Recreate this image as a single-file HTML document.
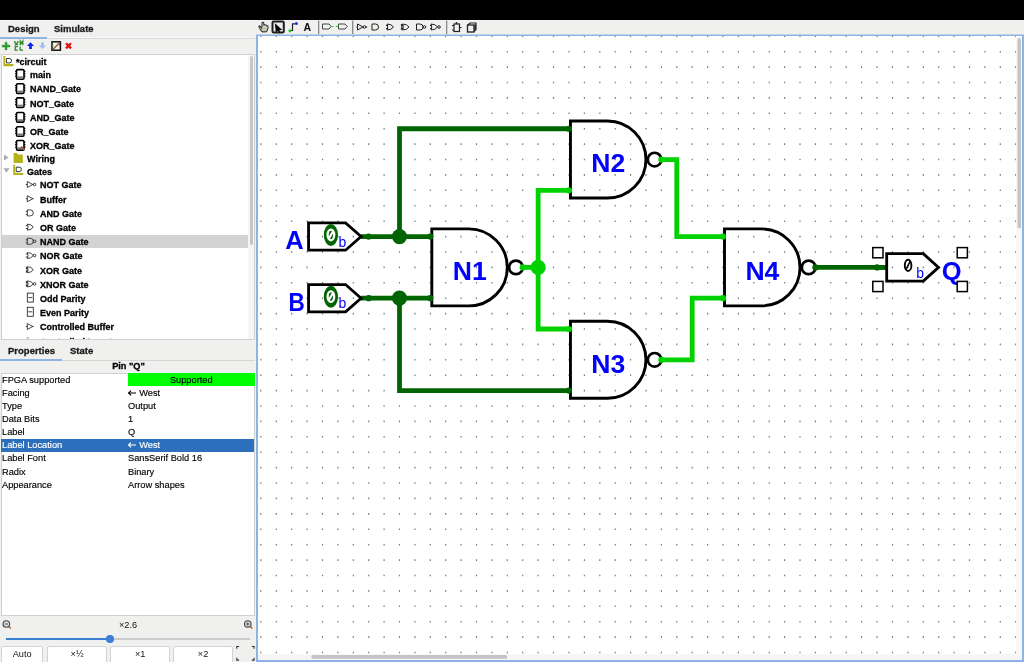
<!DOCTYPE html>
<html><head><meta charset="utf-8"><style>
html,body{margin:0;padding:0}
body{width:1024px;height:662px;overflow:hidden;position:relative;background:#f0f0ef;font-family:"Liberation Sans",sans-serif}
.tt,.pt,.tab,.a,svg{will-change:transform}
.tt,.tab{-webkit-text-stroke-width:0.3px}
.pt{-webkit-text-stroke-width:0.15px}
.a{position:absolute}
.tt{position:absolute;font-weight:bold;font-size:9px;line-height:10px;white-space:nowrap;color:#000}
.pt{position:absolute;font-size:9.25px;line-height:10px;white-space:nowrap;color:#000}
.tab{position:absolute;font-weight:bold;font-size:9.5px;line-height:11px;color:#1a1a1a}
</style></head><body>
<div class="a" style="left:0;top:0;width:1024px;height:19.5px;background:#000"></div>
<div class="a" style="left:0;top:19.5px;width:256px;height:1px;background:#f9f9f9"></div>
<div class="tab" style="left:7.6px;top:23px">Design</div>
<div class="tab" style="left:54.2px;top:23px">Simulate</div>
<div class="a" style="left:0;top:37.2px;width:47px;height:1.5px;background:#8fb4e6"></div>
<div class="a" style="left:47px;top:37px;width:208px;height:1px;background:#f9f9f9"></div><div class="a" style="left:47px;top:38px;width:208px;height:1.2px;background:#d9d9d9"></div>
<div class="a" style="left:1px;top:54px;width:254px;height:285.5px;background:#fff;border:1px solid #d0d0d0;box-sizing:border-box"></div>
<div class="a" style="left:248px;top:55px;width:6px;height:283.5px;background:#f5f5f5"></div>
<div class="a" style="left:250px;top:56px;width:3.2px;height:189px;background:#c6c6c6;border-radius:1.6px"></div>
<div class="a" style="left:2px;top:235px;width:246.2px;height:13.3px;background:#d3d3d3"></div>
<div class="a" style="left:0;top:55px;width:248px;height:283.5px;overflow:hidden">
<div style="position:absolute;left:0;top:-55px">
<div class="tt" style="left:16.2px;top:57.4px">*circuit</div>
<div class="tt" style="left:29.8px;top:70.2px">main</div>
<div class="tt" style="left:29.8px;top:84.4px">NAND_Gate</div>
<div class="tt" style="left:29.8px;top:98.5px">NOT_Gate</div>
<div class="tt" style="left:29.8px;top:113.1px">AND_Gate</div>
<div class="tt" style="left:29.8px;top:127.3px">OR_Gate</div>
<div class="tt" style="left:29.8px;top:141.1px">XOR_Gate</div>
<div class="tt" style="left:27px;top:153.8px">Wiring</div>
<div class="tt" style="left:27px;top:166.6px">Gates</div>
<div class="tt" style="left:40.1px;top:180.4px">NOT Gate</div>
<div class="tt" style="left:40.1px;top:194.6px">Buffer</div>
<div class="tt" style="left:40.1px;top:208.8px">AND Gate</div>
<div class="tt" style="left:40.1px;top:223.0px">OR Gate</div>
<div class="tt" style="left:40.1px;top:237.2px">NAND Gate</div>
<div class="tt" style="left:40.1px;top:251.4px">NOR Gate</div>
<div class="tt" style="left:40.1px;top:265.6px">XOR Gate</div>
<div class="tt" style="left:40.1px;top:279.8px">XNOR Gate</div>
<div class="tt" style="left:40.1px;top:294.0px">Odd Parity</div>
<div class="tt" style="left:40.1px;top:308.2px">Even Parity</div>
<div class="tt" style="left:40.1px;top:322.4px">Controlled Buffer</div>
<div class="tt" style="left:40.1px;top:336.6px">Controlled Inverter</div>
</div></div>
<div class="tab" style="left:7.6px;top:344.5px">Properties</div>
<div class="tab" style="left:69.6px;top:344.5px">State</div>
<div class="a" style="left:0;top:358.8px;width:62px;height:1.5px;background:#8fb4e6"></div>
<div class="a" style="left:62px;top:359.5px;width:193px;height:1px;background:#d6d6d6"></div>
<div class="a" style="left:1.2px;top:361.2px;width:255px;text-align:center;font-weight:bold;font-size:9.2px;line-height:10px;color:#000;-webkit-text-stroke-width:0.3px">Pin "Q"</div>
<div class="a" style="left:1px;top:372.5px;width:254px;height:243px;background:#fff;border:1px solid #d0d0d0;box-sizing:border-box"></div>
<div class="a" style="left:128px;top:373.3px;width:126.5px;height:13.4px;background:#00ff00"></div>
<div class="a" style="left:1.3px;top:438.8px;width:253.2px;height:12.5px;background:#2c6fbd"></div>
<div class="pt" style="left:1.9px;top:374.8px;color:#000">FPGA supported</div>
<div class="pt" style="left:128px;width:126.5px;text-align:center;top:374.8px">Supported</div>
<div class="pt" style="left:1.9px;top:387.9px;color:#000">Facing</div>
<div class="pt" style="left:128px;top:387.9px;color:#000"><svg width="8" height="6" style="display:inline-block;vertical-align:0px;margin-right:3.2px" viewBox="0 0 8 6"><path d="M0.3 3H8M3 0.6L0.6 3L3 5.4" fill="none" stroke="currentColor" stroke-width="1.1"/></svg>West</div>
<div class="pt" style="left:1.9px;top:401.0px;color:#000">Type</div>
<div class="pt" style="left:128px;top:401.0px;color:#000">Output</div>
<div class="pt" style="left:1.9px;top:414.1px;color:#000">Data Bits</div>
<div class="pt" style="left:128px;top:414.1px;color:#000">1</div>
<div class="pt" style="left:1.9px;top:427.2px;color:#000">Label</div>
<div class="pt" style="left:128px;top:427.2px;color:#000">Q</div>
<div class="pt" style="left:1.9px;top:440.3px;color:#fff">Label Location</div>
<div class="pt" style="left:128px;top:440.3px;color:#fff"><svg width="8" height="6" style="display:inline-block;vertical-align:0px;margin-right:3.2px" viewBox="0 0 8 6"><path d="M0.3 3H8M3 0.6L0.6 3L3 5.4" fill="none" stroke="currentColor" stroke-width="1.1"/></svg>West</div>
<div class="pt" style="left:1.9px;top:453.4px;color:#000">Label Font</div>
<div class="pt" style="left:128px;top:453.4px;color:#000">SansSerif Bold 16</div>
<div class="pt" style="left:1.9px;top:466.5px;color:#000">Radix</div>
<div class="pt" style="left:128px;top:466.5px;color:#000">Binary</div>
<div class="pt" style="left:1.9px;top:479.6px;color:#000">Appearance</div>
<div class="pt" style="left:128px;top:479.6px;color:#000">Arrow shapes</div>
<div class="a" style="left:0;top:620px;width:256px;text-align:center;font-size:9.2px;line-height:10px;color:#111">×2.6</div>
<div class="a" style="left:5.6px;top:638.2px;width:103.6px;height:1.6px;background:#3b7fd6"></div>
<div class="a" style="left:109.2px;top:638.2px;width:141px;height:1.6px;background:#cbcbcb"></div>
<div class="a" style="left:105.5px;top:635.2px;width:7.5px;height:7.5px;border-radius:50%;background:#3b7fd6"></div>
<div style="will-change:transform;position:absolute;top:646px;height:20px;background:#fff;border:1px solid #d2d2d2;box-sizing:border-box;border-radius:2px;text-align:center;font-size:9.2px;line-height:14px;color:#111;left:1.3px;width:42.4px">Auto</div>
<div style="will-change:transform;position:absolute;top:646px;height:20px;background:#fff;border:1px solid #d2d2d2;box-sizing:border-box;border-radius:2px;text-align:center;font-size:9.2px;line-height:14px;color:#111;left:46.5px;width:60.2px">×½</div>
<div style="will-change:transform;position:absolute;top:646px;height:20px;background:#fff;border:1px solid #d2d2d2;box-sizing:border-box;border-radius:2px;text-align:center;font-size:9.2px;line-height:14px;color:#111;left:109.7px;width:60.4px">×1</div>
<div style="will-change:transform;position:absolute;top:646px;height:20px;background:#fff;border:1px solid #d2d2d2;box-sizing:border-box;border-radius:2px;text-align:center;font-size:9.2px;line-height:14px;color:#111;left:173.4px;width:60.2px">×2</div>
<svg class="a" style="left:0;top:0" width="1024" height="662" viewBox="0 0 1024 662">
<defs><clipPath id="treeclip"><rect x="0" y="0" width="248" height="338.3"/></clipPath></defs>
<g clip-path="url(#treeclip)"><path d="M3.4 56h2v8h8v2.2h-10z" fill="#b5b21a"/><rect x="5.4" y="57" width="7.5" height="7" fill="#fff"/><path d="M6.4 58.5h3a2.2 2.2 0 0 1 0 4.4h-3z" fill="none" stroke="#333" stroke-width="1"/>
<rect x="16.5" y="69.6" width="7.5" height="9.6" rx="1.2" fill="#fff" stroke="#000" stroke-width="1.6"/><rect x="17.3" y="76.39999999999999" width="5.9" height="2" fill="#777"/><rect x="15" y="70.8" width="1.5" height="1" fill="#000"/><rect x="24" y="70.8" width="1.5" height="1" fill="#000"/><rect x="15" y="73.2" width="1.5" height="1" fill="#000"/><rect x="24" y="73.2" width="1.5" height="1" fill="#000"/><rect x="15" y="75.6" width="1.5" height="1" fill="#000"/><rect x="24" y="75.6" width="1.5" height="1" fill="#000"/>
<rect x="16.5" y="83.8" width="7.5" height="9.6" rx="1.2" fill="#fff" stroke="#000" stroke-width="1.6"/><rect x="17.3" y="90.6" width="5.9" height="2" fill="#777"/><rect x="15" y="85.0" width="1.5" height="1" fill="#000"/><rect x="24" y="85.0" width="1.5" height="1" fill="#000"/><rect x="15" y="87.4" width="1.5" height="1" fill="#000"/><rect x="24" y="87.4" width="1.5" height="1" fill="#000"/><rect x="15" y="89.8" width="1.5" height="1" fill="#000"/><rect x="24" y="89.8" width="1.5" height="1" fill="#000"/>
<rect x="16.5" y="97.89999999999999" width="7.5" height="9.6" rx="1.2" fill="#fff" stroke="#000" stroke-width="1.6"/><rect x="17.3" y="104.69999999999999" width="5.9" height="2" fill="#777"/><rect x="15" y="99.1" width="1.5" height="1" fill="#000"/><rect x="24" y="99.1" width="1.5" height="1" fill="#000"/><rect x="15" y="101.5" width="1.5" height="1" fill="#000"/><rect x="24" y="101.5" width="1.5" height="1" fill="#000"/><rect x="15" y="103.89999999999999" width="1.5" height="1" fill="#000"/><rect x="24" y="103.89999999999999" width="1.5" height="1" fill="#000"/>
<rect x="16.5" y="112.5" width="7.5" height="9.6" rx="1.2" fill="#fff" stroke="#000" stroke-width="1.6"/><rect x="17.3" y="119.3" width="5.9" height="2" fill="#777"/><rect x="15" y="113.7" width="1.5" height="1" fill="#000"/><rect x="24" y="113.7" width="1.5" height="1" fill="#000"/><rect x="15" y="116.10000000000001" width="1.5" height="1" fill="#000"/><rect x="24" y="116.10000000000001" width="1.5" height="1" fill="#000"/><rect x="15" y="118.5" width="1.5" height="1" fill="#000"/><rect x="24" y="118.5" width="1.5" height="1" fill="#000"/>
<rect x="16.5" y="126.7" width="7.5" height="9.6" rx="1.2" fill="#fff" stroke="#000" stroke-width="1.6"/><rect x="17.3" y="133.5" width="5.9" height="2" fill="#777"/><rect x="15" y="127.9" width="1.5" height="1" fill="#000"/><rect x="24" y="127.9" width="1.5" height="1" fill="#000"/><rect x="15" y="130.3" width="1.5" height="1" fill="#000"/><rect x="24" y="130.3" width="1.5" height="1" fill="#000"/><rect x="15" y="132.70000000000002" width="1.5" height="1" fill="#000"/><rect x="24" y="132.70000000000002" width="1.5" height="1" fill="#000"/>
<rect x="16.5" y="140.5" width="7.5" height="9.6" rx="1.2" fill="#fff" stroke="#000" stroke-width="1.6"/><rect x="17.3" y="147.29999999999998" width="5.9" height="2" fill="#777"/><rect x="15" y="141.7" width="1.5" height="1" fill="#000"/><rect x="24" y="141.7" width="1.5" height="1" fill="#000"/><rect x="15" y="144.1" width="1.5" height="1" fill="#000"/><rect x="24" y="144.1" width="1.5" height="1" fill="#000"/><rect x="15" y="146.5" width="1.5" height="1" fill="#000"/><rect x="24" y="146.5" width="1.5" height="1" fill="#000"/>
<path d="M21 146.7l3.5 3.5" stroke="#a0522d" stroke-width="1.8"/>
<path d="M4 154.4l4.5 3l-4.5 3z" fill="#aaa"/>
<path d="M13.6 153.1h3.2l1 1.3h5v8.7h-9.2z" fill="#b5b21a"/>
<path d="M3.5 168.2h6l-3 4.5z" fill="#aaa"/>
<path d="M13.2 164.7h2v8h8v2.2h-10z" fill="#b5b21a"/><rect x="15.2" y="165.7" width="7.5" height="7" fill="#fff"/><path d="M16.2 167.2h3a2.2 2.2 0 0 1 0 4.4h-3z" fill="none" stroke="#333" stroke-width="1"/>
<path d="M27.3 181.5v6l5.5-3z" fill="none" stroke="#222" stroke-width="0.85"/><path d="M25.8 184.5h1.5M32.8 184.5h1" stroke="#222" stroke-width="0.85"/><circle cx="34.6" cy="184.5" r="1.3" fill="none" stroke="#222" stroke-width="0.85"/>
<path d="M27.3 195.7v6l5.5-3z" fill="none" stroke="#222" stroke-width="0.85"/><path d="M25.8 198.7h1.5M32.8 198.7h1" stroke="#222" stroke-width="0.85"/>
<path d="M27.3 209.9h3a3 3 0 0 1 0 6h-3z" fill="none" stroke="#222" stroke-width="0.85"/><path d="M25.8 211.4h1.5M25.8 214.4h1.5" stroke="#222" stroke-width="0.85"/>
<path d="M27.3 224.1q4 0 6 3q-2 3 -6 3q1.5-3 0-6z" fill="none" stroke="#222" stroke-width="0.85"/><path d="M25.8 225.6h2M25.8 228.6h2" stroke="#222" stroke-width="0.85"/>
<path d="M27.3 238.3h3a3 3 0 0 1 0 6h-3z" fill="none" stroke="#222" stroke-width="0.85"/><path d="M25.8 239.8h1.5M25.8 242.8h1.5" stroke="#222" stroke-width="0.85"/><circle cx="34.6" cy="241.3" r="1.3" fill="none" stroke="#222" stroke-width="0.85"/>
<path d="M27.3 252.5q4 0 6 3q-2 3 -6 3q1.5-3 0-6z" fill="none" stroke="#222" stroke-width="0.85"/><path d="M25.8 254.0h2M25.8 257.0h2" stroke="#222" stroke-width="0.85"/><circle cx="34.6" cy="255.5" r="1.3" fill="none" stroke="#222" stroke-width="0.85"/>
<path d="M27.3 266.7q4 0 6 3q-2 3 -6 3q1.5-3 0-6z" fill="none" stroke="#222" stroke-width="0.85"/><path d="M25.8 268.2h2M25.8 271.2h2" stroke="#222" stroke-width="0.85"/><path d="M26.3 266.7q1.5 3 0 6" fill="none" stroke="#222" stroke-width="0.85"/>
<path d="M27.3 280.9q4 0 6 3q-2 3 -6 3q1.5-3 0-6z" fill="none" stroke="#222" stroke-width="0.85"/><path d="M25.8 282.4h2M25.8 285.4h2" stroke="#222" stroke-width="0.85"/><path d="M26.3 280.9q1.5 3 0 6" fill="none" stroke="#222" stroke-width="0.85"/><circle cx="34.6" cy="283.9" r="1.3" fill="none" stroke="#222" stroke-width="0.85"/>
<rect x="27.3" y="293.1" width="6" height="9" fill="none" stroke="#222" stroke-width="0.85"/><path d="M28.3 297.6h4" stroke="#222" stroke-width="0.85"/>
<rect x="27.3" y="307.3" width="6" height="9" fill="none" stroke="#222" stroke-width="0.85"/><path d="M28.3 311.8h4" stroke="#222" stroke-width="0.85"/>
<path d="M27.3 323.5v6l5.5-3z" fill="none" stroke="#222" stroke-width="0.85"/><path d="M25.8 326.5h1.5M32.8 326.5h1" stroke="#222" stroke-width="0.85"/>
<path d="M27.3 337.7v6l5.5-3z" fill="none" stroke="#222" stroke-width="0.85"/><path d="M25.8 340.7h1.5M32.8 340.7h1" stroke="#222" stroke-width="0.85"/></g>
<path d="M5.2 42.3h1.7v2.9h2.9v1.7h-2.9v2.9h-1.7v-2.9h-2.9v-1.7h2.9z" fill="#22b022" stroke="#0d6a0d" stroke-width="0.5"/>
<path d="M14.8 41v1.5l3 2.5v0M17.8 41v1.5l-3 2.5M20.2 45.3v-4.3l1.3 2 1.3-2v4.3M17.8 46.5h-2.6v3.6h2.6M20.2 46.5v3.6h2.8" fill="none" stroke="#2a8a2a" stroke-width="1.3"/>
<path d="M30.5 42.3l3.6 3.6h-2.2v3.1h-2.8v-3.1h-2.2z" fill="#0a28f0"/>
<path d="M42.5 49l3.6-3.6h-2.2v-3.1h-2.8v3.1h-2.2z" fill="#9cc0ee"/>
<rect x="52" y="41.8" width="8.4" height="8.4" fill="#f4f4f4" stroke="#111" stroke-width="1.5"/><path d="M52.8 49.4l7-7" stroke="#9a5a1a" stroke-width="1.4"/><rect x="52.4" y="45" width="1" height="1.5" fill="#22c022"/><rect x="59.2" y="43.5" width="1" height="2" fill="#2255ee"/>
<path d="M66 43.2L71 48.4M71 43.2L66 48.4" stroke="#e01010" stroke-width="2.3"/>
<path d="M261.8 28.2L259.6 25.9L258.8 26.7L261.2 30.8L262.6 31.9L266.6 31.8L268.1 28L267.8 25.8L266.6 25.7L266.2 25L265 25L264.6 24.6L263.8 24.8L263.7 22.6L262.7 22.2L262 23z" fill="#cfcfcf" stroke="#3a3a3a" stroke-width="1.1"/><path d="M262.5 28.2l2.8 2M264 27.5l2.5 2" stroke="#c9c04a" stroke-width="0.9"/>
<rect x="272.5" y="21.5" width="11.3" height="11" rx="1.3" fill="#ececec" stroke="#1e1e1e" stroke-width="2"/><path d="M274.9 23.3L282.3 30L279.3 30.2L280.6 32.6L279.2 33.2L277.9 30.8L275.8 32.4z" fill="#000"/>
<path d="M290.5 30.5h2v-6.7h2.4" fill="none" stroke="#222" stroke-width="1.2"/><circle cx="290" cy="30.8" r="1.6" fill="#1ec81e"/><circle cx="296.4" cy="23.6" r="1.5" fill="#1a2ef0"/>
<text x="307.3" y="30.6" text-anchor="middle" font-family="Liberation Sans" font-weight="bold" font-size="10.5" fill="#111">A</text>
<rect x="318" y="20.5" width="1.3" height="13.5" fill="#8a8a8a"/><rect x="352" y="20.5" width="1.3" height="13.5" fill="#8a8a8a"/><rect x="446" y="20.5" width="1.3" height="13.5" fill="#8a8a8a"/>
<path d="M322.5 24h6.5l2.2 2.5-2.2 2.5h-6.5z" fill="none" stroke="#333" stroke-width="0.9"/><path d="M331.2 26.5h2.2" stroke="#22cc22" stroke-width="1"/>
<path d="M338.5 24h6.5l2.2 2.5-2.2 2.5h-6.5z" fill="none" stroke="#333" stroke-width="0.9"/><path d="M336 26.5h2.5" stroke="#22cc22" stroke-width="1"/>
<path d="M357.5 24v6l5.5-3z" fill="none" stroke="#222" stroke-width="1"/><circle cx="364.5" cy="27" r="1.3" fill="none" stroke="#222" stroke-width="1"/><path d="M356.5 27h1M365.8 27h1.4" stroke="#222" stroke-width="1"/>
<path d="M372 24h3.5a3 3 0 0 1 0 6h-3.5z" fill="none" stroke="#222" stroke-width="1"/>
<path d="M387 24q4.5 0 6.5 3q-2 3-6.5 3q1.5-3 0-6z" fill="none" stroke="#222" stroke-width="1"/><path d="M386 25.5h2M386 28.5h2" stroke="#222" stroke-width="1"/>
<path d="M402.5 24q4.5 0 6.5 3q-2 3-6.5 3q1.5-3 0-6z" fill="none" stroke="#222" stroke-width="1"/><path d="M401.5 25.5h2M401.5 28.5h2" stroke="#222" stroke-width="1"/><path d="M401.2 24q1.5 3 0 6" fill="none" stroke="#222" stroke-width="1"/>
<path d="M416.5 24h3.5a3 3 0 0 1 0 6h-3.5z" fill="none" stroke="#222" stroke-width="1"/><circle cx="424.5" cy="27" r="1.3" fill="none" stroke="#222" stroke-width="1"/>
<path d="M431 24q4.5 0 6.5 3q-2 3-6.5 3q1.5-3 0-6z" fill="none" stroke="#222" stroke-width="1"/><path d="M430 25.5h2M430 28.5h2" stroke="#222" stroke-width="1"/><circle cx="439" cy="27" r="1.3" fill="none" stroke="#222" stroke-width="1"/>
<rect x="454" y="24" width="5.5" height="7.5" fill="none" stroke="#222" stroke-width="1.2"/><path d="M452 25.5h2M452 30h2M459.5 27.5h2" stroke="#222" stroke-width="1"/><circle cx="456.5" cy="23" r="1" fill="#222"/>
<path d="M468 25l2-2h6v6.5l-2 2" fill="none" stroke="#222" stroke-width="1.2"/><rect x="467.5" y="25" width="6.5" height="7" fill="none" stroke="#222" stroke-width="1.3"/><path d="M475 24.5v5" stroke="#222" stroke-width="1.6"/>
<circle cx="6.3" cy="624" r="3.3" fill="#ddd" stroke="#444" stroke-width="1.1"/><path d="M4.6 624h3.4" stroke="#444" stroke-width="0.9"/><path d="M8.8 626.6l2 2" stroke="#b05a10" stroke-width="1.4"/>
<circle cx="247.8" cy="624" r="3.3" fill="#ddd" stroke="#444" stroke-width="1.1"/><path d="M246.1 624h3.4M247.8 622.3v3.4" stroke="#444" stroke-width="0.9"/><path d="M250.3 626.6l2 2" stroke="#b05a10" stroke-width="1.4"/>
<path d="M236.8 648.8v-2.3h2.3M251.8 646.5h2.3v2.3M236.8 657.8v2.3h2.3M254.1 657.8v2.3h-2.3" fill="none" stroke="#333" stroke-width="1.1"/>
</svg>
<div class="a" style="left:256px;top:35px;width:768px;height:627px;background:#fff"></div>
<svg class="a" style="left:0;top:0" width="1024" height="662" viewBox="0 0 1024 662">
<defs><clipPath id="cc"><rect x="258" y="36.1" width="758" height="618"/></clipPath></defs>
<g clip-path="url(#cc)">
<path d="M260.2 35.5h1.2v1.6h-1.2zM260.2 50.9h1.2v1.6h-1.2zM260.2 66.3h1.2v1.6h-1.2zM260.2 81.7h1.2v1.6h-1.2zM260.2 97.1h1.2v1.6h-1.2zM260.2 112.5h1.2v1.6h-1.2zM260.2 127.9h1.2v1.6h-1.2zM260.2 143.3h1.2v1.6h-1.2zM260.2 158.7h1.2v1.6h-1.2zM260.2 174.1h1.2v1.6h-1.2zM260.2 189.5h1.2v1.6h-1.2zM260.2 205.0h1.2v1.6h-1.2zM260.2 220.4h1.2v1.6h-1.2zM260.2 235.8h1.2v1.6h-1.2zM260.2 251.2h1.2v1.6h-1.2zM260.2 266.6h1.2v1.6h-1.2zM260.2 282.0h1.2v1.6h-1.2zM260.2 297.4h1.2v1.6h-1.2zM260.2 312.8h1.2v1.6h-1.2zM260.2 328.2h1.2v1.6h-1.2zM260.2 343.6h1.2v1.6h-1.2zM260.2 359.0h1.2v1.6h-1.2zM260.2 374.4h1.2v1.6h-1.2zM260.2 389.8h1.2v1.6h-1.2zM260.2 405.2h1.2v1.6h-1.2zM260.2 420.6h1.2v1.6h-1.2zM260.2 436.0h1.2v1.6h-1.2zM260.2 451.4h1.2v1.6h-1.2zM260.2 466.8h1.2v1.6h-1.2zM260.2 482.2h1.2v1.6h-1.2zM260.2 497.6h1.2v1.6h-1.2zM260.2 513.1h1.2v1.6h-1.2zM260.2 528.5h1.2v1.6h-1.2zM260.2 543.9h1.2v1.6h-1.2zM260.2 559.3h1.2v1.6h-1.2zM260.2 574.7h1.2v1.6h-1.2zM260.2 590.1h1.2v1.6h-1.2zM260.2 605.5h1.2v1.6h-1.2zM260.2 620.9h1.2v1.6h-1.2zM260.2 636.3h1.2v1.6h-1.2zM260.2 651.7h1.2v1.6h-1.2zM275.7 35.5h1.2v1.6h-1.2zM275.7 50.9h1.2v1.6h-1.2zM275.7 66.3h1.2v1.6h-1.2zM275.7 81.7h1.2v1.6h-1.2zM275.7 97.1h1.2v1.6h-1.2zM275.7 112.5h1.2v1.6h-1.2zM275.7 127.9h1.2v1.6h-1.2zM275.7 143.3h1.2v1.6h-1.2zM275.7 158.7h1.2v1.6h-1.2zM275.7 174.1h1.2v1.6h-1.2zM275.7 189.5h1.2v1.6h-1.2zM275.7 205.0h1.2v1.6h-1.2zM275.7 220.4h1.2v1.6h-1.2zM275.7 235.8h1.2v1.6h-1.2zM275.7 251.2h1.2v1.6h-1.2zM275.7 266.6h1.2v1.6h-1.2zM275.7 282.0h1.2v1.6h-1.2zM275.7 297.4h1.2v1.6h-1.2zM275.7 312.8h1.2v1.6h-1.2zM275.7 328.2h1.2v1.6h-1.2zM275.7 343.6h1.2v1.6h-1.2zM275.7 359.0h1.2v1.6h-1.2zM275.7 374.4h1.2v1.6h-1.2zM275.7 389.8h1.2v1.6h-1.2zM275.7 405.2h1.2v1.6h-1.2zM275.7 420.6h1.2v1.6h-1.2zM275.7 436.0h1.2v1.6h-1.2zM275.7 451.4h1.2v1.6h-1.2zM275.7 466.8h1.2v1.6h-1.2zM275.7 482.2h1.2v1.6h-1.2zM275.7 497.6h1.2v1.6h-1.2zM275.7 513.1h1.2v1.6h-1.2zM275.7 528.5h1.2v1.6h-1.2zM275.7 543.9h1.2v1.6h-1.2zM275.7 559.3h1.2v1.6h-1.2zM275.7 574.7h1.2v1.6h-1.2zM275.7 590.1h1.2v1.6h-1.2zM275.7 605.5h1.2v1.6h-1.2zM275.7 620.9h1.2v1.6h-1.2zM275.7 636.3h1.2v1.6h-1.2zM275.7 651.7h1.2v1.6h-1.2zM291.1 35.5h1.2v1.6h-1.2zM291.1 50.9h1.2v1.6h-1.2zM291.1 66.3h1.2v1.6h-1.2zM291.1 81.7h1.2v1.6h-1.2zM291.1 97.1h1.2v1.6h-1.2zM291.1 112.5h1.2v1.6h-1.2zM291.1 127.9h1.2v1.6h-1.2zM291.1 143.3h1.2v1.6h-1.2zM291.1 158.7h1.2v1.6h-1.2zM291.1 174.1h1.2v1.6h-1.2zM291.1 189.5h1.2v1.6h-1.2zM291.1 205.0h1.2v1.6h-1.2zM291.1 220.4h1.2v1.6h-1.2zM291.1 235.8h1.2v1.6h-1.2zM291.1 251.2h1.2v1.6h-1.2zM291.1 266.6h1.2v1.6h-1.2zM291.1 282.0h1.2v1.6h-1.2zM291.1 297.4h1.2v1.6h-1.2zM291.1 312.8h1.2v1.6h-1.2zM291.1 328.2h1.2v1.6h-1.2zM291.1 343.6h1.2v1.6h-1.2zM291.1 359.0h1.2v1.6h-1.2zM291.1 374.4h1.2v1.6h-1.2zM291.1 389.8h1.2v1.6h-1.2zM291.1 405.2h1.2v1.6h-1.2zM291.1 420.6h1.2v1.6h-1.2zM291.1 436.0h1.2v1.6h-1.2zM291.1 451.4h1.2v1.6h-1.2zM291.1 466.8h1.2v1.6h-1.2zM291.1 482.2h1.2v1.6h-1.2zM291.1 497.6h1.2v1.6h-1.2zM291.1 513.1h1.2v1.6h-1.2zM291.1 528.5h1.2v1.6h-1.2zM291.1 543.9h1.2v1.6h-1.2zM291.1 559.3h1.2v1.6h-1.2zM291.1 574.7h1.2v1.6h-1.2zM291.1 590.1h1.2v1.6h-1.2zM291.1 605.5h1.2v1.6h-1.2zM291.1 620.9h1.2v1.6h-1.2zM291.1 636.3h1.2v1.6h-1.2zM291.1 651.7h1.2v1.6h-1.2zM306.5 35.5h1.2v1.6h-1.2zM306.5 50.9h1.2v1.6h-1.2zM306.5 66.3h1.2v1.6h-1.2zM306.5 81.7h1.2v1.6h-1.2zM306.5 97.1h1.2v1.6h-1.2zM306.5 112.5h1.2v1.6h-1.2zM306.5 127.9h1.2v1.6h-1.2zM306.5 143.3h1.2v1.6h-1.2zM306.5 158.7h1.2v1.6h-1.2zM306.5 174.1h1.2v1.6h-1.2zM306.5 189.5h1.2v1.6h-1.2zM306.5 205.0h1.2v1.6h-1.2zM306.5 220.4h1.2v1.6h-1.2zM306.5 235.8h1.2v1.6h-1.2zM306.5 251.2h1.2v1.6h-1.2zM306.5 266.6h1.2v1.6h-1.2zM306.5 282.0h1.2v1.6h-1.2zM306.5 297.4h1.2v1.6h-1.2zM306.5 312.8h1.2v1.6h-1.2zM306.5 328.2h1.2v1.6h-1.2zM306.5 343.6h1.2v1.6h-1.2zM306.5 359.0h1.2v1.6h-1.2zM306.5 374.4h1.2v1.6h-1.2zM306.5 389.8h1.2v1.6h-1.2zM306.5 405.2h1.2v1.6h-1.2zM306.5 420.6h1.2v1.6h-1.2zM306.5 436.0h1.2v1.6h-1.2zM306.5 451.4h1.2v1.6h-1.2zM306.5 466.8h1.2v1.6h-1.2zM306.5 482.2h1.2v1.6h-1.2zM306.5 497.6h1.2v1.6h-1.2zM306.5 513.1h1.2v1.6h-1.2zM306.5 528.5h1.2v1.6h-1.2zM306.5 543.9h1.2v1.6h-1.2zM306.5 559.3h1.2v1.6h-1.2zM306.5 574.7h1.2v1.6h-1.2zM306.5 590.1h1.2v1.6h-1.2zM306.5 605.5h1.2v1.6h-1.2zM306.5 620.9h1.2v1.6h-1.2zM306.5 636.3h1.2v1.6h-1.2zM306.5 651.7h1.2v1.6h-1.2zM321.9 35.5h1.2v1.6h-1.2zM321.9 50.9h1.2v1.6h-1.2zM321.9 66.3h1.2v1.6h-1.2zM321.9 81.7h1.2v1.6h-1.2zM321.9 97.1h1.2v1.6h-1.2zM321.9 112.5h1.2v1.6h-1.2zM321.9 127.9h1.2v1.6h-1.2zM321.9 143.3h1.2v1.6h-1.2zM321.9 158.7h1.2v1.6h-1.2zM321.9 174.1h1.2v1.6h-1.2zM321.9 189.5h1.2v1.6h-1.2zM321.9 205.0h1.2v1.6h-1.2zM321.9 220.4h1.2v1.6h-1.2zM321.9 235.8h1.2v1.6h-1.2zM321.9 251.2h1.2v1.6h-1.2zM321.9 266.6h1.2v1.6h-1.2zM321.9 282.0h1.2v1.6h-1.2zM321.9 297.4h1.2v1.6h-1.2zM321.9 312.8h1.2v1.6h-1.2zM321.9 328.2h1.2v1.6h-1.2zM321.9 343.6h1.2v1.6h-1.2zM321.9 359.0h1.2v1.6h-1.2zM321.9 374.4h1.2v1.6h-1.2zM321.9 389.8h1.2v1.6h-1.2zM321.9 405.2h1.2v1.6h-1.2zM321.9 420.6h1.2v1.6h-1.2zM321.9 436.0h1.2v1.6h-1.2zM321.9 451.4h1.2v1.6h-1.2zM321.9 466.8h1.2v1.6h-1.2zM321.9 482.2h1.2v1.6h-1.2zM321.9 497.6h1.2v1.6h-1.2zM321.9 513.1h1.2v1.6h-1.2zM321.9 528.5h1.2v1.6h-1.2zM321.9 543.9h1.2v1.6h-1.2zM321.9 559.3h1.2v1.6h-1.2zM321.9 574.7h1.2v1.6h-1.2zM321.9 590.1h1.2v1.6h-1.2zM321.9 605.5h1.2v1.6h-1.2zM321.9 620.9h1.2v1.6h-1.2zM321.9 636.3h1.2v1.6h-1.2zM321.9 651.7h1.2v1.6h-1.2zM337.3 35.5h1.2v1.6h-1.2zM337.3 50.9h1.2v1.6h-1.2zM337.3 66.3h1.2v1.6h-1.2zM337.3 81.7h1.2v1.6h-1.2zM337.3 97.1h1.2v1.6h-1.2zM337.3 112.5h1.2v1.6h-1.2zM337.3 127.9h1.2v1.6h-1.2zM337.3 143.3h1.2v1.6h-1.2zM337.3 158.7h1.2v1.6h-1.2zM337.3 174.1h1.2v1.6h-1.2zM337.3 189.5h1.2v1.6h-1.2zM337.3 205.0h1.2v1.6h-1.2zM337.3 220.4h1.2v1.6h-1.2zM337.3 235.8h1.2v1.6h-1.2zM337.3 251.2h1.2v1.6h-1.2zM337.3 266.6h1.2v1.6h-1.2zM337.3 282.0h1.2v1.6h-1.2zM337.3 297.4h1.2v1.6h-1.2zM337.3 312.8h1.2v1.6h-1.2zM337.3 328.2h1.2v1.6h-1.2zM337.3 343.6h1.2v1.6h-1.2zM337.3 359.0h1.2v1.6h-1.2zM337.3 374.4h1.2v1.6h-1.2zM337.3 389.8h1.2v1.6h-1.2zM337.3 405.2h1.2v1.6h-1.2zM337.3 420.6h1.2v1.6h-1.2zM337.3 436.0h1.2v1.6h-1.2zM337.3 451.4h1.2v1.6h-1.2zM337.3 466.8h1.2v1.6h-1.2zM337.3 482.2h1.2v1.6h-1.2zM337.3 497.6h1.2v1.6h-1.2zM337.3 513.1h1.2v1.6h-1.2zM337.3 528.5h1.2v1.6h-1.2zM337.3 543.9h1.2v1.6h-1.2zM337.3 559.3h1.2v1.6h-1.2zM337.3 574.7h1.2v1.6h-1.2zM337.3 590.1h1.2v1.6h-1.2zM337.3 605.5h1.2v1.6h-1.2zM337.3 620.9h1.2v1.6h-1.2zM337.3 636.3h1.2v1.6h-1.2zM337.3 651.7h1.2v1.6h-1.2zM352.7 35.5h1.2v1.6h-1.2zM352.7 50.9h1.2v1.6h-1.2zM352.7 66.3h1.2v1.6h-1.2zM352.7 81.7h1.2v1.6h-1.2zM352.7 97.1h1.2v1.6h-1.2zM352.7 112.5h1.2v1.6h-1.2zM352.7 127.9h1.2v1.6h-1.2zM352.7 143.3h1.2v1.6h-1.2zM352.7 158.7h1.2v1.6h-1.2zM352.7 174.1h1.2v1.6h-1.2zM352.7 189.5h1.2v1.6h-1.2zM352.7 205.0h1.2v1.6h-1.2zM352.7 220.4h1.2v1.6h-1.2zM352.7 235.8h1.2v1.6h-1.2zM352.7 251.2h1.2v1.6h-1.2zM352.7 266.6h1.2v1.6h-1.2zM352.7 282.0h1.2v1.6h-1.2zM352.7 297.4h1.2v1.6h-1.2zM352.7 312.8h1.2v1.6h-1.2zM352.7 328.2h1.2v1.6h-1.2zM352.7 343.6h1.2v1.6h-1.2zM352.7 359.0h1.2v1.6h-1.2zM352.7 374.4h1.2v1.6h-1.2zM352.7 389.8h1.2v1.6h-1.2zM352.7 405.2h1.2v1.6h-1.2zM352.7 420.6h1.2v1.6h-1.2zM352.7 436.0h1.2v1.6h-1.2zM352.7 451.4h1.2v1.6h-1.2zM352.7 466.8h1.2v1.6h-1.2zM352.7 482.2h1.2v1.6h-1.2zM352.7 497.6h1.2v1.6h-1.2zM352.7 513.1h1.2v1.6h-1.2zM352.7 528.5h1.2v1.6h-1.2zM352.7 543.9h1.2v1.6h-1.2zM352.7 559.3h1.2v1.6h-1.2zM352.7 574.7h1.2v1.6h-1.2zM352.7 590.1h1.2v1.6h-1.2zM352.7 605.5h1.2v1.6h-1.2zM352.7 620.9h1.2v1.6h-1.2zM352.7 636.3h1.2v1.6h-1.2zM352.7 651.7h1.2v1.6h-1.2zM368.1 35.5h1.2v1.6h-1.2zM368.1 50.9h1.2v1.6h-1.2zM368.1 66.3h1.2v1.6h-1.2zM368.1 81.7h1.2v1.6h-1.2zM368.1 97.1h1.2v1.6h-1.2zM368.1 112.5h1.2v1.6h-1.2zM368.1 127.9h1.2v1.6h-1.2zM368.1 143.3h1.2v1.6h-1.2zM368.1 158.7h1.2v1.6h-1.2zM368.1 174.1h1.2v1.6h-1.2zM368.1 189.5h1.2v1.6h-1.2zM368.1 205.0h1.2v1.6h-1.2zM368.1 220.4h1.2v1.6h-1.2zM368.1 235.8h1.2v1.6h-1.2zM368.1 251.2h1.2v1.6h-1.2zM368.1 266.6h1.2v1.6h-1.2zM368.1 282.0h1.2v1.6h-1.2zM368.1 297.4h1.2v1.6h-1.2zM368.1 312.8h1.2v1.6h-1.2zM368.1 328.2h1.2v1.6h-1.2zM368.1 343.6h1.2v1.6h-1.2zM368.1 359.0h1.2v1.6h-1.2zM368.1 374.4h1.2v1.6h-1.2zM368.1 389.8h1.2v1.6h-1.2zM368.1 405.2h1.2v1.6h-1.2zM368.1 420.6h1.2v1.6h-1.2zM368.1 436.0h1.2v1.6h-1.2zM368.1 451.4h1.2v1.6h-1.2zM368.1 466.8h1.2v1.6h-1.2zM368.1 482.2h1.2v1.6h-1.2zM368.1 497.6h1.2v1.6h-1.2zM368.1 513.1h1.2v1.6h-1.2zM368.1 528.5h1.2v1.6h-1.2zM368.1 543.9h1.2v1.6h-1.2zM368.1 559.3h1.2v1.6h-1.2zM368.1 574.7h1.2v1.6h-1.2zM368.1 590.1h1.2v1.6h-1.2zM368.1 605.5h1.2v1.6h-1.2zM368.1 620.9h1.2v1.6h-1.2zM368.1 636.3h1.2v1.6h-1.2zM368.1 651.7h1.2v1.6h-1.2zM383.5 35.5h1.2v1.6h-1.2zM383.5 50.9h1.2v1.6h-1.2zM383.5 66.3h1.2v1.6h-1.2zM383.5 81.7h1.2v1.6h-1.2zM383.5 97.1h1.2v1.6h-1.2zM383.5 112.5h1.2v1.6h-1.2zM383.5 127.9h1.2v1.6h-1.2zM383.5 143.3h1.2v1.6h-1.2zM383.5 158.7h1.2v1.6h-1.2zM383.5 174.1h1.2v1.6h-1.2zM383.5 189.5h1.2v1.6h-1.2zM383.5 205.0h1.2v1.6h-1.2zM383.5 220.4h1.2v1.6h-1.2zM383.5 235.8h1.2v1.6h-1.2zM383.5 251.2h1.2v1.6h-1.2zM383.5 266.6h1.2v1.6h-1.2zM383.5 282.0h1.2v1.6h-1.2zM383.5 297.4h1.2v1.6h-1.2zM383.5 312.8h1.2v1.6h-1.2zM383.5 328.2h1.2v1.6h-1.2zM383.5 343.6h1.2v1.6h-1.2zM383.5 359.0h1.2v1.6h-1.2zM383.5 374.4h1.2v1.6h-1.2zM383.5 389.8h1.2v1.6h-1.2zM383.5 405.2h1.2v1.6h-1.2zM383.5 420.6h1.2v1.6h-1.2zM383.5 436.0h1.2v1.6h-1.2zM383.5 451.4h1.2v1.6h-1.2zM383.5 466.8h1.2v1.6h-1.2zM383.5 482.2h1.2v1.6h-1.2zM383.5 497.6h1.2v1.6h-1.2zM383.5 513.1h1.2v1.6h-1.2zM383.5 528.5h1.2v1.6h-1.2zM383.5 543.9h1.2v1.6h-1.2zM383.5 559.3h1.2v1.6h-1.2zM383.5 574.7h1.2v1.6h-1.2zM383.5 590.1h1.2v1.6h-1.2zM383.5 605.5h1.2v1.6h-1.2zM383.5 620.9h1.2v1.6h-1.2zM383.5 636.3h1.2v1.6h-1.2zM383.5 651.7h1.2v1.6h-1.2zM398.9 35.5h1.2v1.6h-1.2zM398.9 50.9h1.2v1.6h-1.2zM398.9 66.3h1.2v1.6h-1.2zM398.9 81.7h1.2v1.6h-1.2zM398.9 97.1h1.2v1.6h-1.2zM398.9 112.5h1.2v1.6h-1.2zM398.9 127.9h1.2v1.6h-1.2zM398.9 143.3h1.2v1.6h-1.2zM398.9 158.7h1.2v1.6h-1.2zM398.9 174.1h1.2v1.6h-1.2zM398.9 189.5h1.2v1.6h-1.2zM398.9 205.0h1.2v1.6h-1.2zM398.9 220.4h1.2v1.6h-1.2zM398.9 235.8h1.2v1.6h-1.2zM398.9 251.2h1.2v1.6h-1.2zM398.9 266.6h1.2v1.6h-1.2zM398.9 282.0h1.2v1.6h-1.2zM398.9 297.4h1.2v1.6h-1.2zM398.9 312.8h1.2v1.6h-1.2zM398.9 328.2h1.2v1.6h-1.2zM398.9 343.6h1.2v1.6h-1.2zM398.9 359.0h1.2v1.6h-1.2zM398.9 374.4h1.2v1.6h-1.2zM398.9 389.8h1.2v1.6h-1.2zM398.9 405.2h1.2v1.6h-1.2zM398.9 420.6h1.2v1.6h-1.2zM398.9 436.0h1.2v1.6h-1.2zM398.9 451.4h1.2v1.6h-1.2zM398.9 466.8h1.2v1.6h-1.2zM398.9 482.2h1.2v1.6h-1.2zM398.9 497.6h1.2v1.6h-1.2zM398.9 513.1h1.2v1.6h-1.2zM398.9 528.5h1.2v1.6h-1.2zM398.9 543.9h1.2v1.6h-1.2zM398.9 559.3h1.2v1.6h-1.2zM398.9 574.7h1.2v1.6h-1.2zM398.9 590.1h1.2v1.6h-1.2zM398.9 605.5h1.2v1.6h-1.2zM398.9 620.9h1.2v1.6h-1.2zM398.9 636.3h1.2v1.6h-1.2zM398.9 651.7h1.2v1.6h-1.2zM414.3 35.5h1.2v1.6h-1.2zM414.3 50.9h1.2v1.6h-1.2zM414.3 66.3h1.2v1.6h-1.2zM414.3 81.7h1.2v1.6h-1.2zM414.3 97.1h1.2v1.6h-1.2zM414.3 112.5h1.2v1.6h-1.2zM414.3 127.9h1.2v1.6h-1.2zM414.3 143.3h1.2v1.6h-1.2zM414.3 158.7h1.2v1.6h-1.2zM414.3 174.1h1.2v1.6h-1.2zM414.3 189.5h1.2v1.6h-1.2zM414.3 205.0h1.2v1.6h-1.2zM414.3 220.4h1.2v1.6h-1.2zM414.3 235.8h1.2v1.6h-1.2zM414.3 251.2h1.2v1.6h-1.2zM414.3 266.6h1.2v1.6h-1.2zM414.3 282.0h1.2v1.6h-1.2zM414.3 297.4h1.2v1.6h-1.2zM414.3 312.8h1.2v1.6h-1.2zM414.3 328.2h1.2v1.6h-1.2zM414.3 343.6h1.2v1.6h-1.2zM414.3 359.0h1.2v1.6h-1.2zM414.3 374.4h1.2v1.6h-1.2zM414.3 389.8h1.2v1.6h-1.2zM414.3 405.2h1.2v1.6h-1.2zM414.3 420.6h1.2v1.6h-1.2zM414.3 436.0h1.2v1.6h-1.2zM414.3 451.4h1.2v1.6h-1.2zM414.3 466.8h1.2v1.6h-1.2zM414.3 482.2h1.2v1.6h-1.2zM414.3 497.6h1.2v1.6h-1.2zM414.3 513.1h1.2v1.6h-1.2zM414.3 528.5h1.2v1.6h-1.2zM414.3 543.9h1.2v1.6h-1.2zM414.3 559.3h1.2v1.6h-1.2zM414.3 574.7h1.2v1.6h-1.2zM414.3 590.1h1.2v1.6h-1.2zM414.3 605.5h1.2v1.6h-1.2zM414.3 620.9h1.2v1.6h-1.2zM414.3 636.3h1.2v1.6h-1.2zM414.3 651.7h1.2v1.6h-1.2zM429.7 35.5h1.2v1.6h-1.2zM429.7 50.9h1.2v1.6h-1.2zM429.7 66.3h1.2v1.6h-1.2zM429.7 81.7h1.2v1.6h-1.2zM429.7 97.1h1.2v1.6h-1.2zM429.7 112.5h1.2v1.6h-1.2zM429.7 127.9h1.2v1.6h-1.2zM429.7 143.3h1.2v1.6h-1.2zM429.7 158.7h1.2v1.6h-1.2zM429.7 174.1h1.2v1.6h-1.2zM429.7 189.5h1.2v1.6h-1.2zM429.7 205.0h1.2v1.6h-1.2zM429.7 220.4h1.2v1.6h-1.2zM429.7 235.8h1.2v1.6h-1.2zM429.7 251.2h1.2v1.6h-1.2zM429.7 266.6h1.2v1.6h-1.2zM429.7 282.0h1.2v1.6h-1.2zM429.7 297.4h1.2v1.6h-1.2zM429.7 312.8h1.2v1.6h-1.2zM429.7 328.2h1.2v1.6h-1.2zM429.7 343.6h1.2v1.6h-1.2zM429.7 359.0h1.2v1.6h-1.2zM429.7 374.4h1.2v1.6h-1.2zM429.7 389.8h1.2v1.6h-1.2zM429.7 405.2h1.2v1.6h-1.2zM429.7 420.6h1.2v1.6h-1.2zM429.7 436.0h1.2v1.6h-1.2zM429.7 451.4h1.2v1.6h-1.2zM429.7 466.8h1.2v1.6h-1.2zM429.7 482.2h1.2v1.6h-1.2zM429.7 497.6h1.2v1.6h-1.2zM429.7 513.1h1.2v1.6h-1.2zM429.7 528.5h1.2v1.6h-1.2zM429.7 543.9h1.2v1.6h-1.2zM429.7 559.3h1.2v1.6h-1.2zM429.7 574.7h1.2v1.6h-1.2zM429.7 590.1h1.2v1.6h-1.2zM429.7 605.5h1.2v1.6h-1.2zM429.7 620.9h1.2v1.6h-1.2zM429.7 636.3h1.2v1.6h-1.2zM429.7 651.7h1.2v1.6h-1.2zM445.1 35.5h1.2v1.6h-1.2zM445.1 50.9h1.2v1.6h-1.2zM445.1 66.3h1.2v1.6h-1.2zM445.1 81.7h1.2v1.6h-1.2zM445.1 97.1h1.2v1.6h-1.2zM445.1 112.5h1.2v1.6h-1.2zM445.1 127.9h1.2v1.6h-1.2zM445.1 143.3h1.2v1.6h-1.2zM445.1 158.7h1.2v1.6h-1.2zM445.1 174.1h1.2v1.6h-1.2zM445.1 189.5h1.2v1.6h-1.2zM445.1 205.0h1.2v1.6h-1.2zM445.1 220.4h1.2v1.6h-1.2zM445.1 235.8h1.2v1.6h-1.2zM445.1 251.2h1.2v1.6h-1.2zM445.1 266.6h1.2v1.6h-1.2zM445.1 282.0h1.2v1.6h-1.2zM445.1 297.4h1.2v1.6h-1.2zM445.1 312.8h1.2v1.6h-1.2zM445.1 328.2h1.2v1.6h-1.2zM445.1 343.6h1.2v1.6h-1.2zM445.1 359.0h1.2v1.6h-1.2zM445.1 374.4h1.2v1.6h-1.2zM445.1 389.8h1.2v1.6h-1.2zM445.1 405.2h1.2v1.6h-1.2zM445.1 420.6h1.2v1.6h-1.2zM445.1 436.0h1.2v1.6h-1.2zM445.1 451.4h1.2v1.6h-1.2zM445.1 466.8h1.2v1.6h-1.2zM445.1 482.2h1.2v1.6h-1.2zM445.1 497.6h1.2v1.6h-1.2zM445.1 513.1h1.2v1.6h-1.2zM445.1 528.5h1.2v1.6h-1.2zM445.1 543.9h1.2v1.6h-1.2zM445.1 559.3h1.2v1.6h-1.2zM445.1 574.7h1.2v1.6h-1.2zM445.1 590.1h1.2v1.6h-1.2zM445.1 605.5h1.2v1.6h-1.2zM445.1 620.9h1.2v1.6h-1.2zM445.1 636.3h1.2v1.6h-1.2zM445.1 651.7h1.2v1.6h-1.2zM460.5 35.5h1.2v1.6h-1.2zM460.5 50.9h1.2v1.6h-1.2zM460.5 66.3h1.2v1.6h-1.2zM460.5 81.7h1.2v1.6h-1.2zM460.5 97.1h1.2v1.6h-1.2zM460.5 112.5h1.2v1.6h-1.2zM460.5 127.9h1.2v1.6h-1.2zM460.5 143.3h1.2v1.6h-1.2zM460.5 158.7h1.2v1.6h-1.2zM460.5 174.1h1.2v1.6h-1.2zM460.5 189.5h1.2v1.6h-1.2zM460.5 205.0h1.2v1.6h-1.2zM460.5 220.4h1.2v1.6h-1.2zM460.5 235.8h1.2v1.6h-1.2zM460.5 251.2h1.2v1.6h-1.2zM460.5 266.6h1.2v1.6h-1.2zM460.5 282.0h1.2v1.6h-1.2zM460.5 297.4h1.2v1.6h-1.2zM460.5 312.8h1.2v1.6h-1.2zM460.5 328.2h1.2v1.6h-1.2zM460.5 343.6h1.2v1.6h-1.2zM460.5 359.0h1.2v1.6h-1.2zM460.5 374.4h1.2v1.6h-1.2zM460.5 389.8h1.2v1.6h-1.2zM460.5 405.2h1.2v1.6h-1.2zM460.5 420.6h1.2v1.6h-1.2zM460.5 436.0h1.2v1.6h-1.2zM460.5 451.4h1.2v1.6h-1.2zM460.5 466.8h1.2v1.6h-1.2zM460.5 482.2h1.2v1.6h-1.2zM460.5 497.6h1.2v1.6h-1.2zM460.5 513.1h1.2v1.6h-1.2zM460.5 528.5h1.2v1.6h-1.2zM460.5 543.9h1.2v1.6h-1.2zM460.5 559.3h1.2v1.6h-1.2zM460.5 574.7h1.2v1.6h-1.2zM460.5 590.1h1.2v1.6h-1.2zM460.5 605.5h1.2v1.6h-1.2zM460.5 620.9h1.2v1.6h-1.2zM460.5 636.3h1.2v1.6h-1.2zM460.5 651.7h1.2v1.6h-1.2zM475.9 35.5h1.2v1.6h-1.2zM475.9 50.9h1.2v1.6h-1.2zM475.9 66.3h1.2v1.6h-1.2zM475.9 81.7h1.2v1.6h-1.2zM475.9 97.1h1.2v1.6h-1.2zM475.9 112.5h1.2v1.6h-1.2zM475.9 127.9h1.2v1.6h-1.2zM475.9 143.3h1.2v1.6h-1.2zM475.9 158.7h1.2v1.6h-1.2zM475.9 174.1h1.2v1.6h-1.2zM475.9 189.5h1.2v1.6h-1.2zM475.9 205.0h1.2v1.6h-1.2zM475.9 220.4h1.2v1.6h-1.2zM475.9 235.8h1.2v1.6h-1.2zM475.9 251.2h1.2v1.6h-1.2zM475.9 266.6h1.2v1.6h-1.2zM475.9 282.0h1.2v1.6h-1.2zM475.9 297.4h1.2v1.6h-1.2zM475.9 312.8h1.2v1.6h-1.2zM475.9 328.2h1.2v1.6h-1.2zM475.9 343.6h1.2v1.6h-1.2zM475.9 359.0h1.2v1.6h-1.2zM475.9 374.4h1.2v1.6h-1.2zM475.9 389.8h1.2v1.6h-1.2zM475.9 405.2h1.2v1.6h-1.2zM475.9 420.6h1.2v1.6h-1.2zM475.9 436.0h1.2v1.6h-1.2zM475.9 451.4h1.2v1.6h-1.2zM475.9 466.8h1.2v1.6h-1.2zM475.9 482.2h1.2v1.6h-1.2zM475.9 497.6h1.2v1.6h-1.2zM475.9 513.1h1.2v1.6h-1.2zM475.9 528.5h1.2v1.6h-1.2zM475.9 543.9h1.2v1.6h-1.2zM475.9 559.3h1.2v1.6h-1.2zM475.9 574.7h1.2v1.6h-1.2zM475.9 590.1h1.2v1.6h-1.2zM475.9 605.5h1.2v1.6h-1.2zM475.9 620.9h1.2v1.6h-1.2zM475.9 636.3h1.2v1.6h-1.2zM475.9 651.7h1.2v1.6h-1.2zM491.3 35.5h1.2v1.6h-1.2zM491.3 50.9h1.2v1.6h-1.2zM491.3 66.3h1.2v1.6h-1.2zM491.3 81.7h1.2v1.6h-1.2zM491.3 97.1h1.2v1.6h-1.2zM491.3 112.5h1.2v1.6h-1.2zM491.3 127.9h1.2v1.6h-1.2zM491.3 143.3h1.2v1.6h-1.2zM491.3 158.7h1.2v1.6h-1.2zM491.3 174.1h1.2v1.6h-1.2zM491.3 189.5h1.2v1.6h-1.2zM491.3 205.0h1.2v1.6h-1.2zM491.3 220.4h1.2v1.6h-1.2zM491.3 235.8h1.2v1.6h-1.2zM491.3 251.2h1.2v1.6h-1.2zM491.3 266.6h1.2v1.6h-1.2zM491.3 282.0h1.2v1.6h-1.2zM491.3 297.4h1.2v1.6h-1.2zM491.3 312.8h1.2v1.6h-1.2zM491.3 328.2h1.2v1.6h-1.2zM491.3 343.6h1.2v1.6h-1.2zM491.3 359.0h1.2v1.6h-1.2zM491.3 374.4h1.2v1.6h-1.2zM491.3 389.8h1.2v1.6h-1.2zM491.3 405.2h1.2v1.6h-1.2zM491.3 420.6h1.2v1.6h-1.2zM491.3 436.0h1.2v1.6h-1.2zM491.3 451.4h1.2v1.6h-1.2zM491.3 466.8h1.2v1.6h-1.2zM491.3 482.2h1.2v1.6h-1.2zM491.3 497.6h1.2v1.6h-1.2zM491.3 513.1h1.2v1.6h-1.2zM491.3 528.5h1.2v1.6h-1.2zM491.3 543.9h1.2v1.6h-1.2zM491.3 559.3h1.2v1.6h-1.2zM491.3 574.7h1.2v1.6h-1.2zM491.3 590.1h1.2v1.6h-1.2zM491.3 605.5h1.2v1.6h-1.2zM491.3 620.9h1.2v1.6h-1.2zM491.3 636.3h1.2v1.6h-1.2zM491.3 651.7h1.2v1.6h-1.2zM506.7 35.5h1.2v1.6h-1.2zM506.7 50.9h1.2v1.6h-1.2zM506.7 66.3h1.2v1.6h-1.2zM506.7 81.7h1.2v1.6h-1.2zM506.7 97.1h1.2v1.6h-1.2zM506.7 112.5h1.2v1.6h-1.2zM506.7 127.9h1.2v1.6h-1.2zM506.7 143.3h1.2v1.6h-1.2zM506.7 158.7h1.2v1.6h-1.2zM506.7 174.1h1.2v1.6h-1.2zM506.7 189.5h1.2v1.6h-1.2zM506.7 205.0h1.2v1.6h-1.2zM506.7 220.4h1.2v1.6h-1.2zM506.7 235.8h1.2v1.6h-1.2zM506.7 251.2h1.2v1.6h-1.2zM506.7 266.6h1.2v1.6h-1.2zM506.7 282.0h1.2v1.6h-1.2zM506.7 297.4h1.2v1.6h-1.2zM506.7 312.8h1.2v1.6h-1.2zM506.7 328.2h1.2v1.6h-1.2zM506.7 343.6h1.2v1.6h-1.2zM506.7 359.0h1.2v1.6h-1.2zM506.7 374.4h1.2v1.6h-1.2zM506.7 389.8h1.2v1.6h-1.2zM506.7 405.2h1.2v1.6h-1.2zM506.7 420.6h1.2v1.6h-1.2zM506.7 436.0h1.2v1.6h-1.2zM506.7 451.4h1.2v1.6h-1.2zM506.7 466.8h1.2v1.6h-1.2zM506.7 482.2h1.2v1.6h-1.2zM506.7 497.6h1.2v1.6h-1.2zM506.7 513.1h1.2v1.6h-1.2zM506.7 528.5h1.2v1.6h-1.2zM506.7 543.9h1.2v1.6h-1.2zM506.7 559.3h1.2v1.6h-1.2zM506.7 574.7h1.2v1.6h-1.2zM506.7 590.1h1.2v1.6h-1.2zM506.7 605.5h1.2v1.6h-1.2zM506.7 620.9h1.2v1.6h-1.2zM506.7 636.3h1.2v1.6h-1.2zM506.7 651.7h1.2v1.6h-1.2zM522.1 35.5h1.2v1.6h-1.2zM522.1 50.9h1.2v1.6h-1.2zM522.1 66.3h1.2v1.6h-1.2zM522.1 81.7h1.2v1.6h-1.2zM522.1 97.1h1.2v1.6h-1.2zM522.1 112.5h1.2v1.6h-1.2zM522.1 127.9h1.2v1.6h-1.2zM522.1 143.3h1.2v1.6h-1.2zM522.1 158.7h1.2v1.6h-1.2zM522.1 174.1h1.2v1.6h-1.2zM522.1 189.5h1.2v1.6h-1.2zM522.1 205.0h1.2v1.6h-1.2zM522.1 220.4h1.2v1.6h-1.2zM522.1 235.8h1.2v1.6h-1.2zM522.1 251.2h1.2v1.6h-1.2zM522.1 266.6h1.2v1.6h-1.2zM522.1 282.0h1.2v1.6h-1.2zM522.1 297.4h1.2v1.6h-1.2zM522.1 312.8h1.2v1.6h-1.2zM522.1 328.2h1.2v1.6h-1.2zM522.1 343.6h1.2v1.6h-1.2zM522.1 359.0h1.2v1.6h-1.2zM522.1 374.4h1.2v1.6h-1.2zM522.1 389.8h1.2v1.6h-1.2zM522.1 405.2h1.2v1.6h-1.2zM522.1 420.6h1.2v1.6h-1.2zM522.1 436.0h1.2v1.6h-1.2zM522.1 451.4h1.2v1.6h-1.2zM522.1 466.8h1.2v1.6h-1.2zM522.1 482.2h1.2v1.6h-1.2zM522.1 497.6h1.2v1.6h-1.2zM522.1 513.1h1.2v1.6h-1.2zM522.1 528.5h1.2v1.6h-1.2zM522.1 543.9h1.2v1.6h-1.2zM522.1 559.3h1.2v1.6h-1.2zM522.1 574.7h1.2v1.6h-1.2zM522.1 590.1h1.2v1.6h-1.2zM522.1 605.5h1.2v1.6h-1.2zM522.1 620.9h1.2v1.6h-1.2zM522.1 636.3h1.2v1.6h-1.2zM522.1 651.7h1.2v1.6h-1.2zM537.5 35.5h1.2v1.6h-1.2zM537.5 50.9h1.2v1.6h-1.2zM537.5 66.3h1.2v1.6h-1.2zM537.5 81.7h1.2v1.6h-1.2zM537.5 97.1h1.2v1.6h-1.2zM537.5 112.5h1.2v1.6h-1.2zM537.5 127.9h1.2v1.6h-1.2zM537.5 143.3h1.2v1.6h-1.2zM537.5 158.7h1.2v1.6h-1.2zM537.5 174.1h1.2v1.6h-1.2zM537.5 189.5h1.2v1.6h-1.2zM537.5 205.0h1.2v1.6h-1.2zM537.5 220.4h1.2v1.6h-1.2zM537.5 235.8h1.2v1.6h-1.2zM537.5 251.2h1.2v1.6h-1.2zM537.5 266.6h1.2v1.6h-1.2zM537.5 282.0h1.2v1.6h-1.2zM537.5 297.4h1.2v1.6h-1.2zM537.5 312.8h1.2v1.6h-1.2zM537.5 328.2h1.2v1.6h-1.2zM537.5 343.6h1.2v1.6h-1.2zM537.5 359.0h1.2v1.6h-1.2zM537.5 374.4h1.2v1.6h-1.2zM537.5 389.8h1.2v1.6h-1.2zM537.5 405.2h1.2v1.6h-1.2zM537.5 420.6h1.2v1.6h-1.2zM537.5 436.0h1.2v1.6h-1.2zM537.5 451.4h1.2v1.6h-1.2zM537.5 466.8h1.2v1.6h-1.2zM537.5 482.2h1.2v1.6h-1.2zM537.5 497.6h1.2v1.6h-1.2zM537.5 513.1h1.2v1.6h-1.2zM537.5 528.5h1.2v1.6h-1.2zM537.5 543.9h1.2v1.6h-1.2zM537.5 559.3h1.2v1.6h-1.2zM537.5 574.7h1.2v1.6h-1.2zM537.5 590.1h1.2v1.6h-1.2zM537.5 605.5h1.2v1.6h-1.2zM537.5 620.9h1.2v1.6h-1.2zM537.5 636.3h1.2v1.6h-1.2zM537.5 651.7h1.2v1.6h-1.2zM552.9 35.5h1.2v1.6h-1.2zM552.9 50.9h1.2v1.6h-1.2zM552.9 66.3h1.2v1.6h-1.2zM552.9 81.7h1.2v1.6h-1.2zM552.9 97.1h1.2v1.6h-1.2zM552.9 112.5h1.2v1.6h-1.2zM552.9 127.9h1.2v1.6h-1.2zM552.9 143.3h1.2v1.6h-1.2zM552.9 158.7h1.2v1.6h-1.2zM552.9 174.1h1.2v1.6h-1.2zM552.9 189.5h1.2v1.6h-1.2zM552.9 205.0h1.2v1.6h-1.2zM552.9 220.4h1.2v1.6h-1.2zM552.9 235.8h1.2v1.6h-1.2zM552.9 251.2h1.2v1.6h-1.2zM552.9 266.6h1.2v1.6h-1.2zM552.9 282.0h1.2v1.6h-1.2zM552.9 297.4h1.2v1.6h-1.2zM552.9 312.8h1.2v1.6h-1.2zM552.9 328.2h1.2v1.6h-1.2zM552.9 343.6h1.2v1.6h-1.2zM552.9 359.0h1.2v1.6h-1.2zM552.9 374.4h1.2v1.6h-1.2zM552.9 389.8h1.2v1.6h-1.2zM552.9 405.2h1.2v1.6h-1.2zM552.9 420.6h1.2v1.6h-1.2zM552.9 436.0h1.2v1.6h-1.2zM552.9 451.4h1.2v1.6h-1.2zM552.9 466.8h1.2v1.6h-1.2zM552.9 482.2h1.2v1.6h-1.2zM552.9 497.6h1.2v1.6h-1.2zM552.9 513.1h1.2v1.6h-1.2zM552.9 528.5h1.2v1.6h-1.2zM552.9 543.9h1.2v1.6h-1.2zM552.9 559.3h1.2v1.6h-1.2zM552.9 574.7h1.2v1.6h-1.2zM552.9 590.1h1.2v1.6h-1.2zM552.9 605.5h1.2v1.6h-1.2zM552.9 620.9h1.2v1.6h-1.2zM552.9 636.3h1.2v1.6h-1.2zM552.9 651.7h1.2v1.6h-1.2zM568.4 35.5h1.2v1.6h-1.2zM568.4 50.9h1.2v1.6h-1.2zM568.4 66.3h1.2v1.6h-1.2zM568.4 81.7h1.2v1.6h-1.2zM568.4 97.1h1.2v1.6h-1.2zM568.4 112.5h1.2v1.6h-1.2zM568.4 127.9h1.2v1.6h-1.2zM568.4 143.3h1.2v1.6h-1.2zM568.4 158.7h1.2v1.6h-1.2zM568.4 174.1h1.2v1.6h-1.2zM568.4 189.5h1.2v1.6h-1.2zM568.4 205.0h1.2v1.6h-1.2zM568.4 220.4h1.2v1.6h-1.2zM568.4 235.8h1.2v1.6h-1.2zM568.4 251.2h1.2v1.6h-1.2zM568.4 266.6h1.2v1.6h-1.2zM568.4 282.0h1.2v1.6h-1.2zM568.4 297.4h1.2v1.6h-1.2zM568.4 312.8h1.2v1.6h-1.2zM568.4 328.2h1.2v1.6h-1.2zM568.4 343.6h1.2v1.6h-1.2zM568.4 359.0h1.2v1.6h-1.2zM568.4 374.4h1.2v1.6h-1.2zM568.4 389.8h1.2v1.6h-1.2zM568.4 405.2h1.2v1.6h-1.2zM568.4 420.6h1.2v1.6h-1.2zM568.4 436.0h1.2v1.6h-1.2zM568.4 451.4h1.2v1.6h-1.2zM568.4 466.8h1.2v1.6h-1.2zM568.4 482.2h1.2v1.6h-1.2zM568.4 497.6h1.2v1.6h-1.2zM568.4 513.1h1.2v1.6h-1.2zM568.4 528.5h1.2v1.6h-1.2zM568.4 543.9h1.2v1.6h-1.2zM568.4 559.3h1.2v1.6h-1.2zM568.4 574.7h1.2v1.6h-1.2zM568.4 590.1h1.2v1.6h-1.2zM568.4 605.5h1.2v1.6h-1.2zM568.4 620.9h1.2v1.6h-1.2zM568.4 636.3h1.2v1.6h-1.2zM568.4 651.7h1.2v1.6h-1.2zM583.8 35.5h1.2v1.6h-1.2zM583.8 50.9h1.2v1.6h-1.2zM583.8 66.3h1.2v1.6h-1.2zM583.8 81.7h1.2v1.6h-1.2zM583.8 97.1h1.2v1.6h-1.2zM583.8 112.5h1.2v1.6h-1.2zM583.8 127.9h1.2v1.6h-1.2zM583.8 143.3h1.2v1.6h-1.2zM583.8 158.7h1.2v1.6h-1.2zM583.8 174.1h1.2v1.6h-1.2zM583.8 189.5h1.2v1.6h-1.2zM583.8 205.0h1.2v1.6h-1.2zM583.8 220.4h1.2v1.6h-1.2zM583.8 235.8h1.2v1.6h-1.2zM583.8 251.2h1.2v1.6h-1.2zM583.8 266.6h1.2v1.6h-1.2zM583.8 282.0h1.2v1.6h-1.2zM583.8 297.4h1.2v1.6h-1.2zM583.8 312.8h1.2v1.6h-1.2zM583.8 328.2h1.2v1.6h-1.2zM583.8 343.6h1.2v1.6h-1.2zM583.8 359.0h1.2v1.6h-1.2zM583.8 374.4h1.2v1.6h-1.2zM583.8 389.8h1.2v1.6h-1.2zM583.8 405.2h1.2v1.6h-1.2zM583.8 420.6h1.2v1.6h-1.2zM583.8 436.0h1.2v1.6h-1.2zM583.8 451.4h1.2v1.6h-1.2zM583.8 466.8h1.2v1.6h-1.2zM583.8 482.2h1.2v1.6h-1.2zM583.8 497.6h1.2v1.6h-1.2zM583.8 513.1h1.2v1.6h-1.2zM583.8 528.5h1.2v1.6h-1.2zM583.8 543.9h1.2v1.6h-1.2zM583.8 559.3h1.2v1.6h-1.2zM583.8 574.7h1.2v1.6h-1.2zM583.8 590.1h1.2v1.6h-1.2zM583.8 605.5h1.2v1.6h-1.2zM583.8 620.9h1.2v1.6h-1.2zM583.8 636.3h1.2v1.6h-1.2zM583.8 651.7h1.2v1.6h-1.2zM599.2 35.5h1.2v1.6h-1.2zM599.2 50.9h1.2v1.6h-1.2zM599.2 66.3h1.2v1.6h-1.2zM599.2 81.7h1.2v1.6h-1.2zM599.2 97.1h1.2v1.6h-1.2zM599.2 112.5h1.2v1.6h-1.2zM599.2 127.9h1.2v1.6h-1.2zM599.2 143.3h1.2v1.6h-1.2zM599.2 158.7h1.2v1.6h-1.2zM599.2 174.1h1.2v1.6h-1.2zM599.2 189.5h1.2v1.6h-1.2zM599.2 205.0h1.2v1.6h-1.2zM599.2 220.4h1.2v1.6h-1.2zM599.2 235.8h1.2v1.6h-1.2zM599.2 251.2h1.2v1.6h-1.2zM599.2 266.6h1.2v1.6h-1.2zM599.2 282.0h1.2v1.6h-1.2zM599.2 297.4h1.2v1.6h-1.2zM599.2 312.8h1.2v1.6h-1.2zM599.2 328.2h1.2v1.6h-1.2zM599.2 343.6h1.2v1.6h-1.2zM599.2 359.0h1.2v1.6h-1.2zM599.2 374.4h1.2v1.6h-1.2zM599.2 389.8h1.2v1.6h-1.2zM599.2 405.2h1.2v1.6h-1.2zM599.2 420.6h1.2v1.6h-1.2zM599.2 436.0h1.2v1.6h-1.2zM599.2 451.4h1.2v1.6h-1.2zM599.2 466.8h1.2v1.6h-1.2zM599.2 482.2h1.2v1.6h-1.2zM599.2 497.6h1.2v1.6h-1.2zM599.2 513.1h1.2v1.6h-1.2zM599.2 528.5h1.2v1.6h-1.2zM599.2 543.9h1.2v1.6h-1.2zM599.2 559.3h1.2v1.6h-1.2zM599.2 574.7h1.2v1.6h-1.2zM599.2 590.1h1.2v1.6h-1.2zM599.2 605.5h1.2v1.6h-1.2zM599.2 620.9h1.2v1.6h-1.2zM599.2 636.3h1.2v1.6h-1.2zM599.2 651.7h1.2v1.6h-1.2zM614.6 35.5h1.2v1.6h-1.2zM614.6 50.9h1.2v1.6h-1.2zM614.6 66.3h1.2v1.6h-1.2zM614.6 81.7h1.2v1.6h-1.2zM614.6 97.1h1.2v1.6h-1.2zM614.6 112.5h1.2v1.6h-1.2zM614.6 127.9h1.2v1.6h-1.2zM614.6 143.3h1.2v1.6h-1.2zM614.6 158.7h1.2v1.6h-1.2zM614.6 174.1h1.2v1.6h-1.2zM614.6 189.5h1.2v1.6h-1.2zM614.6 205.0h1.2v1.6h-1.2zM614.6 220.4h1.2v1.6h-1.2zM614.6 235.8h1.2v1.6h-1.2zM614.6 251.2h1.2v1.6h-1.2zM614.6 266.6h1.2v1.6h-1.2zM614.6 282.0h1.2v1.6h-1.2zM614.6 297.4h1.2v1.6h-1.2zM614.6 312.8h1.2v1.6h-1.2zM614.6 328.2h1.2v1.6h-1.2zM614.6 343.6h1.2v1.6h-1.2zM614.6 359.0h1.2v1.6h-1.2zM614.6 374.4h1.2v1.6h-1.2zM614.6 389.8h1.2v1.6h-1.2zM614.6 405.2h1.2v1.6h-1.2zM614.6 420.6h1.2v1.6h-1.2zM614.6 436.0h1.2v1.6h-1.2zM614.6 451.4h1.2v1.6h-1.2zM614.6 466.8h1.2v1.6h-1.2zM614.6 482.2h1.2v1.6h-1.2zM614.6 497.6h1.2v1.6h-1.2zM614.6 513.1h1.2v1.6h-1.2zM614.6 528.5h1.2v1.6h-1.2zM614.6 543.9h1.2v1.6h-1.2zM614.6 559.3h1.2v1.6h-1.2zM614.6 574.7h1.2v1.6h-1.2zM614.6 590.1h1.2v1.6h-1.2zM614.6 605.5h1.2v1.6h-1.2zM614.6 620.9h1.2v1.6h-1.2zM614.6 636.3h1.2v1.6h-1.2zM614.6 651.7h1.2v1.6h-1.2zM630.0 35.5h1.2v1.6h-1.2zM630.0 50.9h1.2v1.6h-1.2zM630.0 66.3h1.2v1.6h-1.2zM630.0 81.7h1.2v1.6h-1.2zM630.0 97.1h1.2v1.6h-1.2zM630.0 112.5h1.2v1.6h-1.2zM630.0 127.9h1.2v1.6h-1.2zM630.0 143.3h1.2v1.6h-1.2zM630.0 158.7h1.2v1.6h-1.2zM630.0 174.1h1.2v1.6h-1.2zM630.0 189.5h1.2v1.6h-1.2zM630.0 205.0h1.2v1.6h-1.2zM630.0 220.4h1.2v1.6h-1.2zM630.0 235.8h1.2v1.6h-1.2zM630.0 251.2h1.2v1.6h-1.2zM630.0 266.6h1.2v1.6h-1.2zM630.0 282.0h1.2v1.6h-1.2zM630.0 297.4h1.2v1.6h-1.2zM630.0 312.8h1.2v1.6h-1.2zM630.0 328.2h1.2v1.6h-1.2zM630.0 343.6h1.2v1.6h-1.2zM630.0 359.0h1.2v1.6h-1.2zM630.0 374.4h1.2v1.6h-1.2zM630.0 389.8h1.2v1.6h-1.2zM630.0 405.2h1.2v1.6h-1.2zM630.0 420.6h1.2v1.6h-1.2zM630.0 436.0h1.2v1.6h-1.2zM630.0 451.4h1.2v1.6h-1.2zM630.0 466.8h1.2v1.6h-1.2zM630.0 482.2h1.2v1.6h-1.2zM630.0 497.6h1.2v1.6h-1.2zM630.0 513.1h1.2v1.6h-1.2zM630.0 528.5h1.2v1.6h-1.2zM630.0 543.9h1.2v1.6h-1.2zM630.0 559.3h1.2v1.6h-1.2zM630.0 574.7h1.2v1.6h-1.2zM630.0 590.1h1.2v1.6h-1.2zM630.0 605.5h1.2v1.6h-1.2zM630.0 620.9h1.2v1.6h-1.2zM630.0 636.3h1.2v1.6h-1.2zM630.0 651.7h1.2v1.6h-1.2zM645.4 35.5h1.2v1.6h-1.2zM645.4 50.9h1.2v1.6h-1.2zM645.4 66.3h1.2v1.6h-1.2zM645.4 81.7h1.2v1.6h-1.2zM645.4 97.1h1.2v1.6h-1.2zM645.4 112.5h1.2v1.6h-1.2zM645.4 127.9h1.2v1.6h-1.2zM645.4 143.3h1.2v1.6h-1.2zM645.4 158.7h1.2v1.6h-1.2zM645.4 174.1h1.2v1.6h-1.2zM645.4 189.5h1.2v1.6h-1.2zM645.4 205.0h1.2v1.6h-1.2zM645.4 220.4h1.2v1.6h-1.2zM645.4 235.8h1.2v1.6h-1.2zM645.4 251.2h1.2v1.6h-1.2zM645.4 266.6h1.2v1.6h-1.2zM645.4 282.0h1.2v1.6h-1.2zM645.4 297.4h1.2v1.6h-1.2zM645.4 312.8h1.2v1.6h-1.2zM645.4 328.2h1.2v1.6h-1.2zM645.4 343.6h1.2v1.6h-1.2zM645.4 359.0h1.2v1.6h-1.2zM645.4 374.4h1.2v1.6h-1.2zM645.4 389.8h1.2v1.6h-1.2zM645.4 405.2h1.2v1.6h-1.2zM645.4 420.6h1.2v1.6h-1.2zM645.4 436.0h1.2v1.6h-1.2zM645.4 451.4h1.2v1.6h-1.2zM645.4 466.8h1.2v1.6h-1.2zM645.4 482.2h1.2v1.6h-1.2zM645.4 497.6h1.2v1.6h-1.2zM645.4 513.1h1.2v1.6h-1.2zM645.4 528.5h1.2v1.6h-1.2zM645.4 543.9h1.2v1.6h-1.2zM645.4 559.3h1.2v1.6h-1.2zM645.4 574.7h1.2v1.6h-1.2zM645.4 590.1h1.2v1.6h-1.2zM645.4 605.5h1.2v1.6h-1.2zM645.4 620.9h1.2v1.6h-1.2zM645.4 636.3h1.2v1.6h-1.2zM645.4 651.7h1.2v1.6h-1.2zM660.8 35.5h1.2v1.6h-1.2zM660.8 50.9h1.2v1.6h-1.2zM660.8 66.3h1.2v1.6h-1.2zM660.8 81.7h1.2v1.6h-1.2zM660.8 97.1h1.2v1.6h-1.2zM660.8 112.5h1.2v1.6h-1.2zM660.8 127.9h1.2v1.6h-1.2zM660.8 143.3h1.2v1.6h-1.2zM660.8 158.7h1.2v1.6h-1.2zM660.8 174.1h1.2v1.6h-1.2zM660.8 189.5h1.2v1.6h-1.2zM660.8 205.0h1.2v1.6h-1.2zM660.8 220.4h1.2v1.6h-1.2zM660.8 235.8h1.2v1.6h-1.2zM660.8 251.2h1.2v1.6h-1.2zM660.8 266.6h1.2v1.6h-1.2zM660.8 282.0h1.2v1.6h-1.2zM660.8 297.4h1.2v1.6h-1.2zM660.8 312.8h1.2v1.6h-1.2zM660.8 328.2h1.2v1.6h-1.2zM660.8 343.6h1.2v1.6h-1.2zM660.8 359.0h1.2v1.6h-1.2zM660.8 374.4h1.2v1.6h-1.2zM660.8 389.8h1.2v1.6h-1.2zM660.8 405.2h1.2v1.6h-1.2zM660.8 420.6h1.2v1.6h-1.2zM660.8 436.0h1.2v1.6h-1.2zM660.8 451.4h1.2v1.6h-1.2zM660.8 466.8h1.2v1.6h-1.2zM660.8 482.2h1.2v1.6h-1.2zM660.8 497.6h1.2v1.6h-1.2zM660.8 513.1h1.2v1.6h-1.2zM660.8 528.5h1.2v1.6h-1.2zM660.8 543.9h1.2v1.6h-1.2zM660.8 559.3h1.2v1.6h-1.2zM660.8 574.7h1.2v1.6h-1.2zM660.8 590.1h1.2v1.6h-1.2zM660.8 605.5h1.2v1.6h-1.2zM660.8 620.9h1.2v1.6h-1.2zM660.8 636.3h1.2v1.6h-1.2zM660.8 651.7h1.2v1.6h-1.2zM676.2 35.5h1.2v1.6h-1.2zM676.2 50.9h1.2v1.6h-1.2zM676.2 66.3h1.2v1.6h-1.2zM676.2 81.7h1.2v1.6h-1.2zM676.2 97.1h1.2v1.6h-1.2zM676.2 112.5h1.2v1.6h-1.2zM676.2 127.9h1.2v1.6h-1.2zM676.2 143.3h1.2v1.6h-1.2zM676.2 158.7h1.2v1.6h-1.2zM676.2 174.1h1.2v1.6h-1.2zM676.2 189.5h1.2v1.6h-1.2zM676.2 205.0h1.2v1.6h-1.2zM676.2 220.4h1.2v1.6h-1.2zM676.2 235.8h1.2v1.6h-1.2zM676.2 251.2h1.2v1.6h-1.2zM676.2 266.6h1.2v1.6h-1.2zM676.2 282.0h1.2v1.6h-1.2zM676.2 297.4h1.2v1.6h-1.2zM676.2 312.8h1.2v1.6h-1.2zM676.2 328.2h1.2v1.6h-1.2zM676.2 343.6h1.2v1.6h-1.2zM676.2 359.0h1.2v1.6h-1.2zM676.2 374.4h1.2v1.6h-1.2zM676.2 389.8h1.2v1.6h-1.2zM676.2 405.2h1.2v1.6h-1.2zM676.2 420.6h1.2v1.6h-1.2zM676.2 436.0h1.2v1.6h-1.2zM676.2 451.4h1.2v1.6h-1.2zM676.2 466.8h1.2v1.6h-1.2zM676.2 482.2h1.2v1.6h-1.2zM676.2 497.6h1.2v1.6h-1.2zM676.2 513.1h1.2v1.6h-1.2zM676.2 528.5h1.2v1.6h-1.2zM676.2 543.9h1.2v1.6h-1.2zM676.2 559.3h1.2v1.6h-1.2zM676.2 574.7h1.2v1.6h-1.2zM676.2 590.1h1.2v1.6h-1.2zM676.2 605.5h1.2v1.6h-1.2zM676.2 620.9h1.2v1.6h-1.2zM676.2 636.3h1.2v1.6h-1.2zM676.2 651.7h1.2v1.6h-1.2zM691.6 35.5h1.2v1.6h-1.2zM691.6 50.9h1.2v1.6h-1.2zM691.6 66.3h1.2v1.6h-1.2zM691.6 81.7h1.2v1.6h-1.2zM691.6 97.1h1.2v1.6h-1.2zM691.6 112.5h1.2v1.6h-1.2zM691.6 127.9h1.2v1.6h-1.2zM691.6 143.3h1.2v1.6h-1.2zM691.6 158.7h1.2v1.6h-1.2zM691.6 174.1h1.2v1.6h-1.2zM691.6 189.5h1.2v1.6h-1.2zM691.6 205.0h1.2v1.6h-1.2zM691.6 220.4h1.2v1.6h-1.2zM691.6 235.8h1.2v1.6h-1.2zM691.6 251.2h1.2v1.6h-1.2zM691.6 266.6h1.2v1.6h-1.2zM691.6 282.0h1.2v1.6h-1.2zM691.6 297.4h1.2v1.6h-1.2zM691.6 312.8h1.2v1.6h-1.2zM691.6 328.2h1.2v1.6h-1.2zM691.6 343.6h1.2v1.6h-1.2zM691.6 359.0h1.2v1.6h-1.2zM691.6 374.4h1.2v1.6h-1.2zM691.6 389.8h1.2v1.6h-1.2zM691.6 405.2h1.2v1.6h-1.2zM691.6 420.6h1.2v1.6h-1.2zM691.6 436.0h1.2v1.6h-1.2zM691.6 451.4h1.2v1.6h-1.2zM691.6 466.8h1.2v1.6h-1.2zM691.6 482.2h1.2v1.6h-1.2zM691.6 497.6h1.2v1.6h-1.2zM691.6 513.1h1.2v1.6h-1.2zM691.6 528.5h1.2v1.6h-1.2zM691.6 543.9h1.2v1.6h-1.2zM691.6 559.3h1.2v1.6h-1.2zM691.6 574.7h1.2v1.6h-1.2zM691.6 590.1h1.2v1.6h-1.2zM691.6 605.5h1.2v1.6h-1.2zM691.6 620.9h1.2v1.6h-1.2zM691.6 636.3h1.2v1.6h-1.2zM691.6 651.7h1.2v1.6h-1.2zM707.0 35.5h1.2v1.6h-1.2zM707.0 50.9h1.2v1.6h-1.2zM707.0 66.3h1.2v1.6h-1.2zM707.0 81.7h1.2v1.6h-1.2zM707.0 97.1h1.2v1.6h-1.2zM707.0 112.5h1.2v1.6h-1.2zM707.0 127.9h1.2v1.6h-1.2zM707.0 143.3h1.2v1.6h-1.2zM707.0 158.7h1.2v1.6h-1.2zM707.0 174.1h1.2v1.6h-1.2zM707.0 189.5h1.2v1.6h-1.2zM707.0 205.0h1.2v1.6h-1.2zM707.0 220.4h1.2v1.6h-1.2zM707.0 235.8h1.2v1.6h-1.2zM707.0 251.2h1.2v1.6h-1.2zM707.0 266.6h1.2v1.6h-1.2zM707.0 282.0h1.2v1.6h-1.2zM707.0 297.4h1.2v1.6h-1.2zM707.0 312.8h1.2v1.6h-1.2zM707.0 328.2h1.2v1.6h-1.2zM707.0 343.6h1.2v1.6h-1.2zM707.0 359.0h1.2v1.6h-1.2zM707.0 374.4h1.2v1.6h-1.2zM707.0 389.8h1.2v1.6h-1.2zM707.0 405.2h1.2v1.6h-1.2zM707.0 420.6h1.2v1.6h-1.2zM707.0 436.0h1.2v1.6h-1.2zM707.0 451.4h1.2v1.6h-1.2zM707.0 466.8h1.2v1.6h-1.2zM707.0 482.2h1.2v1.6h-1.2zM707.0 497.6h1.2v1.6h-1.2zM707.0 513.1h1.2v1.6h-1.2zM707.0 528.5h1.2v1.6h-1.2zM707.0 543.9h1.2v1.6h-1.2zM707.0 559.3h1.2v1.6h-1.2zM707.0 574.7h1.2v1.6h-1.2zM707.0 590.1h1.2v1.6h-1.2zM707.0 605.5h1.2v1.6h-1.2zM707.0 620.9h1.2v1.6h-1.2zM707.0 636.3h1.2v1.6h-1.2zM707.0 651.7h1.2v1.6h-1.2zM722.4 35.5h1.2v1.6h-1.2zM722.4 50.9h1.2v1.6h-1.2zM722.4 66.3h1.2v1.6h-1.2zM722.4 81.7h1.2v1.6h-1.2zM722.4 97.1h1.2v1.6h-1.2zM722.4 112.5h1.2v1.6h-1.2zM722.4 127.9h1.2v1.6h-1.2zM722.4 143.3h1.2v1.6h-1.2zM722.4 158.7h1.2v1.6h-1.2zM722.4 174.1h1.2v1.6h-1.2zM722.4 189.5h1.2v1.6h-1.2zM722.4 205.0h1.2v1.6h-1.2zM722.4 220.4h1.2v1.6h-1.2zM722.4 235.8h1.2v1.6h-1.2zM722.4 251.2h1.2v1.6h-1.2zM722.4 266.6h1.2v1.6h-1.2zM722.4 282.0h1.2v1.6h-1.2zM722.4 297.4h1.2v1.6h-1.2zM722.4 312.8h1.2v1.6h-1.2zM722.4 328.2h1.2v1.6h-1.2zM722.4 343.6h1.2v1.6h-1.2zM722.4 359.0h1.2v1.6h-1.2zM722.4 374.4h1.2v1.6h-1.2zM722.4 389.8h1.2v1.6h-1.2zM722.4 405.2h1.2v1.6h-1.2zM722.4 420.6h1.2v1.6h-1.2zM722.4 436.0h1.2v1.6h-1.2zM722.4 451.4h1.2v1.6h-1.2zM722.4 466.8h1.2v1.6h-1.2zM722.4 482.2h1.2v1.6h-1.2zM722.4 497.6h1.2v1.6h-1.2zM722.4 513.1h1.2v1.6h-1.2zM722.4 528.5h1.2v1.6h-1.2zM722.4 543.9h1.2v1.6h-1.2zM722.4 559.3h1.2v1.6h-1.2zM722.4 574.7h1.2v1.6h-1.2zM722.4 590.1h1.2v1.6h-1.2zM722.4 605.5h1.2v1.6h-1.2zM722.4 620.9h1.2v1.6h-1.2zM722.4 636.3h1.2v1.6h-1.2zM722.4 651.7h1.2v1.6h-1.2zM737.8 35.5h1.2v1.6h-1.2zM737.8 50.9h1.2v1.6h-1.2zM737.8 66.3h1.2v1.6h-1.2zM737.8 81.7h1.2v1.6h-1.2zM737.8 97.1h1.2v1.6h-1.2zM737.8 112.5h1.2v1.6h-1.2zM737.8 127.9h1.2v1.6h-1.2zM737.8 143.3h1.2v1.6h-1.2zM737.8 158.7h1.2v1.6h-1.2zM737.8 174.1h1.2v1.6h-1.2zM737.8 189.5h1.2v1.6h-1.2zM737.8 205.0h1.2v1.6h-1.2zM737.8 220.4h1.2v1.6h-1.2zM737.8 235.8h1.2v1.6h-1.2zM737.8 251.2h1.2v1.6h-1.2zM737.8 266.6h1.2v1.6h-1.2zM737.8 282.0h1.2v1.6h-1.2zM737.8 297.4h1.2v1.6h-1.2zM737.8 312.8h1.2v1.6h-1.2zM737.8 328.2h1.2v1.6h-1.2zM737.8 343.6h1.2v1.6h-1.2zM737.8 359.0h1.2v1.6h-1.2zM737.8 374.4h1.2v1.6h-1.2zM737.8 389.8h1.2v1.6h-1.2zM737.8 405.2h1.2v1.6h-1.2zM737.8 420.6h1.2v1.6h-1.2zM737.8 436.0h1.2v1.6h-1.2zM737.8 451.4h1.2v1.6h-1.2zM737.8 466.8h1.2v1.6h-1.2zM737.8 482.2h1.2v1.6h-1.2zM737.8 497.6h1.2v1.6h-1.2zM737.8 513.1h1.2v1.6h-1.2zM737.8 528.5h1.2v1.6h-1.2zM737.8 543.9h1.2v1.6h-1.2zM737.8 559.3h1.2v1.6h-1.2zM737.8 574.7h1.2v1.6h-1.2zM737.8 590.1h1.2v1.6h-1.2zM737.8 605.5h1.2v1.6h-1.2zM737.8 620.9h1.2v1.6h-1.2zM737.8 636.3h1.2v1.6h-1.2zM737.8 651.7h1.2v1.6h-1.2zM753.2 35.5h1.2v1.6h-1.2zM753.2 50.9h1.2v1.6h-1.2zM753.2 66.3h1.2v1.6h-1.2zM753.2 81.7h1.2v1.6h-1.2zM753.2 97.1h1.2v1.6h-1.2zM753.2 112.5h1.2v1.6h-1.2zM753.2 127.9h1.2v1.6h-1.2zM753.2 143.3h1.2v1.6h-1.2zM753.2 158.7h1.2v1.6h-1.2zM753.2 174.1h1.2v1.6h-1.2zM753.2 189.5h1.2v1.6h-1.2zM753.2 205.0h1.2v1.6h-1.2zM753.2 220.4h1.2v1.6h-1.2zM753.2 235.8h1.2v1.6h-1.2zM753.2 251.2h1.2v1.6h-1.2zM753.2 266.6h1.2v1.6h-1.2zM753.2 282.0h1.2v1.6h-1.2zM753.2 297.4h1.2v1.6h-1.2zM753.2 312.8h1.2v1.6h-1.2zM753.2 328.2h1.2v1.6h-1.2zM753.2 343.6h1.2v1.6h-1.2zM753.2 359.0h1.2v1.6h-1.2zM753.2 374.4h1.2v1.6h-1.2zM753.2 389.8h1.2v1.6h-1.2zM753.2 405.2h1.2v1.6h-1.2zM753.2 420.6h1.2v1.6h-1.2zM753.2 436.0h1.2v1.6h-1.2zM753.2 451.4h1.2v1.6h-1.2zM753.2 466.8h1.2v1.6h-1.2zM753.2 482.2h1.2v1.6h-1.2zM753.2 497.6h1.2v1.6h-1.2zM753.2 513.1h1.2v1.6h-1.2zM753.2 528.5h1.2v1.6h-1.2zM753.2 543.9h1.2v1.6h-1.2zM753.2 559.3h1.2v1.6h-1.2zM753.2 574.7h1.2v1.6h-1.2zM753.2 590.1h1.2v1.6h-1.2zM753.2 605.5h1.2v1.6h-1.2zM753.2 620.9h1.2v1.6h-1.2zM753.2 636.3h1.2v1.6h-1.2zM753.2 651.7h1.2v1.6h-1.2zM768.6 35.5h1.2v1.6h-1.2zM768.6 50.9h1.2v1.6h-1.2zM768.6 66.3h1.2v1.6h-1.2zM768.6 81.7h1.2v1.6h-1.2zM768.6 97.1h1.2v1.6h-1.2zM768.6 112.5h1.2v1.6h-1.2zM768.6 127.9h1.2v1.6h-1.2zM768.6 143.3h1.2v1.6h-1.2zM768.6 158.7h1.2v1.6h-1.2zM768.6 174.1h1.2v1.6h-1.2zM768.6 189.5h1.2v1.6h-1.2zM768.6 205.0h1.2v1.6h-1.2zM768.6 220.4h1.2v1.6h-1.2zM768.6 235.8h1.2v1.6h-1.2zM768.6 251.2h1.2v1.6h-1.2zM768.6 266.6h1.2v1.6h-1.2zM768.6 282.0h1.2v1.6h-1.2zM768.6 297.4h1.2v1.6h-1.2zM768.6 312.8h1.2v1.6h-1.2zM768.6 328.2h1.2v1.6h-1.2zM768.6 343.6h1.2v1.6h-1.2zM768.6 359.0h1.2v1.6h-1.2zM768.6 374.4h1.2v1.6h-1.2zM768.6 389.8h1.2v1.6h-1.2zM768.6 405.2h1.2v1.6h-1.2zM768.6 420.6h1.2v1.6h-1.2zM768.6 436.0h1.2v1.6h-1.2zM768.6 451.4h1.2v1.6h-1.2zM768.6 466.8h1.2v1.6h-1.2zM768.6 482.2h1.2v1.6h-1.2zM768.6 497.6h1.2v1.6h-1.2zM768.6 513.1h1.2v1.6h-1.2zM768.6 528.5h1.2v1.6h-1.2zM768.6 543.9h1.2v1.6h-1.2zM768.6 559.3h1.2v1.6h-1.2zM768.6 574.7h1.2v1.6h-1.2zM768.6 590.1h1.2v1.6h-1.2zM768.6 605.5h1.2v1.6h-1.2zM768.6 620.9h1.2v1.6h-1.2zM768.6 636.3h1.2v1.6h-1.2zM768.6 651.7h1.2v1.6h-1.2zM784.0 35.5h1.2v1.6h-1.2zM784.0 50.9h1.2v1.6h-1.2zM784.0 66.3h1.2v1.6h-1.2zM784.0 81.7h1.2v1.6h-1.2zM784.0 97.1h1.2v1.6h-1.2zM784.0 112.5h1.2v1.6h-1.2zM784.0 127.9h1.2v1.6h-1.2zM784.0 143.3h1.2v1.6h-1.2zM784.0 158.7h1.2v1.6h-1.2zM784.0 174.1h1.2v1.6h-1.2zM784.0 189.5h1.2v1.6h-1.2zM784.0 205.0h1.2v1.6h-1.2zM784.0 220.4h1.2v1.6h-1.2zM784.0 235.8h1.2v1.6h-1.2zM784.0 251.2h1.2v1.6h-1.2zM784.0 266.6h1.2v1.6h-1.2zM784.0 282.0h1.2v1.6h-1.2zM784.0 297.4h1.2v1.6h-1.2zM784.0 312.8h1.2v1.6h-1.2zM784.0 328.2h1.2v1.6h-1.2zM784.0 343.6h1.2v1.6h-1.2zM784.0 359.0h1.2v1.6h-1.2zM784.0 374.4h1.2v1.6h-1.2zM784.0 389.8h1.2v1.6h-1.2zM784.0 405.2h1.2v1.6h-1.2zM784.0 420.6h1.2v1.6h-1.2zM784.0 436.0h1.2v1.6h-1.2zM784.0 451.4h1.2v1.6h-1.2zM784.0 466.8h1.2v1.6h-1.2zM784.0 482.2h1.2v1.6h-1.2zM784.0 497.6h1.2v1.6h-1.2zM784.0 513.1h1.2v1.6h-1.2zM784.0 528.5h1.2v1.6h-1.2zM784.0 543.9h1.2v1.6h-1.2zM784.0 559.3h1.2v1.6h-1.2zM784.0 574.7h1.2v1.6h-1.2zM784.0 590.1h1.2v1.6h-1.2zM784.0 605.5h1.2v1.6h-1.2zM784.0 620.9h1.2v1.6h-1.2zM784.0 636.3h1.2v1.6h-1.2zM784.0 651.7h1.2v1.6h-1.2zM799.4 35.5h1.2v1.6h-1.2zM799.4 50.9h1.2v1.6h-1.2zM799.4 66.3h1.2v1.6h-1.2zM799.4 81.7h1.2v1.6h-1.2zM799.4 97.1h1.2v1.6h-1.2zM799.4 112.5h1.2v1.6h-1.2zM799.4 127.9h1.2v1.6h-1.2zM799.4 143.3h1.2v1.6h-1.2zM799.4 158.7h1.2v1.6h-1.2zM799.4 174.1h1.2v1.6h-1.2zM799.4 189.5h1.2v1.6h-1.2zM799.4 205.0h1.2v1.6h-1.2zM799.4 220.4h1.2v1.6h-1.2zM799.4 235.8h1.2v1.6h-1.2zM799.4 251.2h1.2v1.6h-1.2zM799.4 266.6h1.2v1.6h-1.2zM799.4 282.0h1.2v1.6h-1.2zM799.4 297.4h1.2v1.6h-1.2zM799.4 312.8h1.2v1.6h-1.2zM799.4 328.2h1.2v1.6h-1.2zM799.4 343.6h1.2v1.6h-1.2zM799.4 359.0h1.2v1.6h-1.2zM799.4 374.4h1.2v1.6h-1.2zM799.4 389.8h1.2v1.6h-1.2zM799.4 405.2h1.2v1.6h-1.2zM799.4 420.6h1.2v1.6h-1.2zM799.4 436.0h1.2v1.6h-1.2zM799.4 451.4h1.2v1.6h-1.2zM799.4 466.8h1.2v1.6h-1.2zM799.4 482.2h1.2v1.6h-1.2zM799.4 497.6h1.2v1.6h-1.2zM799.4 513.1h1.2v1.6h-1.2zM799.4 528.5h1.2v1.6h-1.2zM799.4 543.9h1.2v1.6h-1.2zM799.4 559.3h1.2v1.6h-1.2zM799.4 574.7h1.2v1.6h-1.2zM799.4 590.1h1.2v1.6h-1.2zM799.4 605.5h1.2v1.6h-1.2zM799.4 620.9h1.2v1.6h-1.2zM799.4 636.3h1.2v1.6h-1.2zM799.4 651.7h1.2v1.6h-1.2zM814.8 35.5h1.2v1.6h-1.2zM814.8 50.9h1.2v1.6h-1.2zM814.8 66.3h1.2v1.6h-1.2zM814.8 81.7h1.2v1.6h-1.2zM814.8 97.1h1.2v1.6h-1.2zM814.8 112.5h1.2v1.6h-1.2zM814.8 127.9h1.2v1.6h-1.2zM814.8 143.3h1.2v1.6h-1.2zM814.8 158.7h1.2v1.6h-1.2zM814.8 174.1h1.2v1.6h-1.2zM814.8 189.5h1.2v1.6h-1.2zM814.8 205.0h1.2v1.6h-1.2zM814.8 220.4h1.2v1.6h-1.2zM814.8 235.8h1.2v1.6h-1.2zM814.8 251.2h1.2v1.6h-1.2zM814.8 266.6h1.2v1.6h-1.2zM814.8 282.0h1.2v1.6h-1.2zM814.8 297.4h1.2v1.6h-1.2zM814.8 312.8h1.2v1.6h-1.2zM814.8 328.2h1.2v1.6h-1.2zM814.8 343.6h1.2v1.6h-1.2zM814.8 359.0h1.2v1.6h-1.2zM814.8 374.4h1.2v1.6h-1.2zM814.8 389.8h1.2v1.6h-1.2zM814.8 405.2h1.2v1.6h-1.2zM814.8 420.6h1.2v1.6h-1.2zM814.8 436.0h1.2v1.6h-1.2zM814.8 451.4h1.2v1.6h-1.2zM814.8 466.8h1.2v1.6h-1.2zM814.8 482.2h1.2v1.6h-1.2zM814.8 497.6h1.2v1.6h-1.2zM814.8 513.1h1.2v1.6h-1.2zM814.8 528.5h1.2v1.6h-1.2zM814.8 543.9h1.2v1.6h-1.2zM814.8 559.3h1.2v1.6h-1.2zM814.8 574.7h1.2v1.6h-1.2zM814.8 590.1h1.2v1.6h-1.2zM814.8 605.5h1.2v1.6h-1.2zM814.8 620.9h1.2v1.6h-1.2zM814.8 636.3h1.2v1.6h-1.2zM814.8 651.7h1.2v1.6h-1.2zM830.2 35.5h1.2v1.6h-1.2zM830.2 50.9h1.2v1.6h-1.2zM830.2 66.3h1.2v1.6h-1.2zM830.2 81.7h1.2v1.6h-1.2zM830.2 97.1h1.2v1.6h-1.2zM830.2 112.5h1.2v1.6h-1.2zM830.2 127.9h1.2v1.6h-1.2zM830.2 143.3h1.2v1.6h-1.2zM830.2 158.7h1.2v1.6h-1.2zM830.2 174.1h1.2v1.6h-1.2zM830.2 189.5h1.2v1.6h-1.2zM830.2 205.0h1.2v1.6h-1.2zM830.2 220.4h1.2v1.6h-1.2zM830.2 235.8h1.2v1.6h-1.2zM830.2 251.2h1.2v1.6h-1.2zM830.2 266.6h1.2v1.6h-1.2zM830.2 282.0h1.2v1.6h-1.2zM830.2 297.4h1.2v1.6h-1.2zM830.2 312.8h1.2v1.6h-1.2zM830.2 328.2h1.2v1.6h-1.2zM830.2 343.6h1.2v1.6h-1.2zM830.2 359.0h1.2v1.6h-1.2zM830.2 374.4h1.2v1.6h-1.2zM830.2 389.8h1.2v1.6h-1.2zM830.2 405.2h1.2v1.6h-1.2zM830.2 420.6h1.2v1.6h-1.2zM830.2 436.0h1.2v1.6h-1.2zM830.2 451.4h1.2v1.6h-1.2zM830.2 466.8h1.2v1.6h-1.2zM830.2 482.2h1.2v1.6h-1.2zM830.2 497.6h1.2v1.6h-1.2zM830.2 513.1h1.2v1.6h-1.2zM830.2 528.5h1.2v1.6h-1.2zM830.2 543.9h1.2v1.6h-1.2zM830.2 559.3h1.2v1.6h-1.2zM830.2 574.7h1.2v1.6h-1.2zM830.2 590.1h1.2v1.6h-1.2zM830.2 605.5h1.2v1.6h-1.2zM830.2 620.9h1.2v1.6h-1.2zM830.2 636.3h1.2v1.6h-1.2zM830.2 651.7h1.2v1.6h-1.2zM845.6 35.5h1.2v1.6h-1.2zM845.6 50.9h1.2v1.6h-1.2zM845.6 66.3h1.2v1.6h-1.2zM845.6 81.7h1.2v1.6h-1.2zM845.6 97.1h1.2v1.6h-1.2zM845.6 112.5h1.2v1.6h-1.2zM845.6 127.9h1.2v1.6h-1.2zM845.6 143.3h1.2v1.6h-1.2zM845.6 158.7h1.2v1.6h-1.2zM845.6 174.1h1.2v1.6h-1.2zM845.6 189.5h1.2v1.6h-1.2zM845.6 205.0h1.2v1.6h-1.2zM845.6 220.4h1.2v1.6h-1.2zM845.6 235.8h1.2v1.6h-1.2zM845.6 251.2h1.2v1.6h-1.2zM845.6 266.6h1.2v1.6h-1.2zM845.6 282.0h1.2v1.6h-1.2zM845.6 297.4h1.2v1.6h-1.2zM845.6 312.8h1.2v1.6h-1.2zM845.6 328.2h1.2v1.6h-1.2zM845.6 343.6h1.2v1.6h-1.2zM845.6 359.0h1.2v1.6h-1.2zM845.6 374.4h1.2v1.6h-1.2zM845.6 389.8h1.2v1.6h-1.2zM845.6 405.2h1.2v1.6h-1.2zM845.6 420.6h1.2v1.6h-1.2zM845.6 436.0h1.2v1.6h-1.2zM845.6 451.4h1.2v1.6h-1.2zM845.6 466.8h1.2v1.6h-1.2zM845.6 482.2h1.2v1.6h-1.2zM845.6 497.6h1.2v1.6h-1.2zM845.6 513.1h1.2v1.6h-1.2zM845.6 528.5h1.2v1.6h-1.2zM845.6 543.9h1.2v1.6h-1.2zM845.6 559.3h1.2v1.6h-1.2zM845.6 574.7h1.2v1.6h-1.2zM845.6 590.1h1.2v1.6h-1.2zM845.6 605.5h1.2v1.6h-1.2zM845.6 620.9h1.2v1.6h-1.2zM845.6 636.3h1.2v1.6h-1.2zM845.6 651.7h1.2v1.6h-1.2zM861.0 35.5h1.2v1.6h-1.2zM861.0 50.9h1.2v1.6h-1.2zM861.0 66.3h1.2v1.6h-1.2zM861.0 81.7h1.2v1.6h-1.2zM861.0 97.1h1.2v1.6h-1.2zM861.0 112.5h1.2v1.6h-1.2zM861.0 127.9h1.2v1.6h-1.2zM861.0 143.3h1.2v1.6h-1.2zM861.0 158.7h1.2v1.6h-1.2zM861.0 174.1h1.2v1.6h-1.2zM861.0 189.5h1.2v1.6h-1.2zM861.0 205.0h1.2v1.6h-1.2zM861.0 220.4h1.2v1.6h-1.2zM861.0 235.8h1.2v1.6h-1.2zM861.0 251.2h1.2v1.6h-1.2zM861.0 266.6h1.2v1.6h-1.2zM861.0 282.0h1.2v1.6h-1.2zM861.0 297.4h1.2v1.6h-1.2zM861.0 312.8h1.2v1.6h-1.2zM861.0 328.2h1.2v1.6h-1.2zM861.0 343.6h1.2v1.6h-1.2zM861.0 359.0h1.2v1.6h-1.2zM861.0 374.4h1.2v1.6h-1.2zM861.0 389.8h1.2v1.6h-1.2zM861.0 405.2h1.2v1.6h-1.2zM861.0 420.6h1.2v1.6h-1.2zM861.0 436.0h1.2v1.6h-1.2zM861.0 451.4h1.2v1.6h-1.2zM861.0 466.8h1.2v1.6h-1.2zM861.0 482.2h1.2v1.6h-1.2zM861.0 497.6h1.2v1.6h-1.2zM861.0 513.1h1.2v1.6h-1.2zM861.0 528.5h1.2v1.6h-1.2zM861.0 543.9h1.2v1.6h-1.2zM861.0 559.3h1.2v1.6h-1.2zM861.0 574.7h1.2v1.6h-1.2zM861.0 590.1h1.2v1.6h-1.2zM861.0 605.5h1.2v1.6h-1.2zM861.0 620.9h1.2v1.6h-1.2zM861.0 636.3h1.2v1.6h-1.2zM861.0 651.7h1.2v1.6h-1.2zM876.4 35.5h1.2v1.6h-1.2zM876.4 50.9h1.2v1.6h-1.2zM876.4 66.3h1.2v1.6h-1.2zM876.4 81.7h1.2v1.6h-1.2zM876.4 97.1h1.2v1.6h-1.2zM876.4 112.5h1.2v1.6h-1.2zM876.4 127.9h1.2v1.6h-1.2zM876.4 143.3h1.2v1.6h-1.2zM876.4 158.7h1.2v1.6h-1.2zM876.4 174.1h1.2v1.6h-1.2zM876.4 189.5h1.2v1.6h-1.2zM876.4 205.0h1.2v1.6h-1.2zM876.4 220.4h1.2v1.6h-1.2zM876.4 235.8h1.2v1.6h-1.2zM876.4 251.2h1.2v1.6h-1.2zM876.4 266.6h1.2v1.6h-1.2zM876.4 282.0h1.2v1.6h-1.2zM876.4 297.4h1.2v1.6h-1.2zM876.4 312.8h1.2v1.6h-1.2zM876.4 328.2h1.2v1.6h-1.2zM876.4 343.6h1.2v1.6h-1.2zM876.4 359.0h1.2v1.6h-1.2zM876.4 374.4h1.2v1.6h-1.2zM876.4 389.8h1.2v1.6h-1.2zM876.4 405.2h1.2v1.6h-1.2zM876.4 420.6h1.2v1.6h-1.2zM876.4 436.0h1.2v1.6h-1.2zM876.4 451.4h1.2v1.6h-1.2zM876.4 466.8h1.2v1.6h-1.2zM876.4 482.2h1.2v1.6h-1.2zM876.4 497.6h1.2v1.6h-1.2zM876.4 513.1h1.2v1.6h-1.2zM876.4 528.5h1.2v1.6h-1.2zM876.4 543.9h1.2v1.6h-1.2zM876.4 559.3h1.2v1.6h-1.2zM876.4 574.7h1.2v1.6h-1.2zM876.4 590.1h1.2v1.6h-1.2zM876.4 605.5h1.2v1.6h-1.2zM876.4 620.9h1.2v1.6h-1.2zM876.4 636.3h1.2v1.6h-1.2zM876.4 651.7h1.2v1.6h-1.2zM891.9 35.5h1.2v1.6h-1.2zM891.9 50.9h1.2v1.6h-1.2zM891.9 66.3h1.2v1.6h-1.2zM891.9 81.7h1.2v1.6h-1.2zM891.9 97.1h1.2v1.6h-1.2zM891.9 112.5h1.2v1.6h-1.2zM891.9 127.9h1.2v1.6h-1.2zM891.9 143.3h1.2v1.6h-1.2zM891.9 158.7h1.2v1.6h-1.2zM891.9 174.1h1.2v1.6h-1.2zM891.9 189.5h1.2v1.6h-1.2zM891.9 205.0h1.2v1.6h-1.2zM891.9 220.4h1.2v1.6h-1.2zM891.9 235.8h1.2v1.6h-1.2zM891.9 251.2h1.2v1.6h-1.2zM891.9 266.6h1.2v1.6h-1.2zM891.9 282.0h1.2v1.6h-1.2zM891.9 297.4h1.2v1.6h-1.2zM891.9 312.8h1.2v1.6h-1.2zM891.9 328.2h1.2v1.6h-1.2zM891.9 343.6h1.2v1.6h-1.2zM891.9 359.0h1.2v1.6h-1.2zM891.9 374.4h1.2v1.6h-1.2zM891.9 389.8h1.2v1.6h-1.2zM891.9 405.2h1.2v1.6h-1.2zM891.9 420.6h1.2v1.6h-1.2zM891.9 436.0h1.2v1.6h-1.2zM891.9 451.4h1.2v1.6h-1.2zM891.9 466.8h1.2v1.6h-1.2zM891.9 482.2h1.2v1.6h-1.2zM891.9 497.6h1.2v1.6h-1.2zM891.9 513.1h1.2v1.6h-1.2zM891.9 528.5h1.2v1.6h-1.2zM891.9 543.9h1.2v1.6h-1.2zM891.9 559.3h1.2v1.6h-1.2zM891.9 574.7h1.2v1.6h-1.2zM891.9 590.1h1.2v1.6h-1.2zM891.9 605.5h1.2v1.6h-1.2zM891.9 620.9h1.2v1.6h-1.2zM891.9 636.3h1.2v1.6h-1.2zM891.9 651.7h1.2v1.6h-1.2zM907.3 35.5h1.2v1.6h-1.2zM907.3 50.9h1.2v1.6h-1.2zM907.3 66.3h1.2v1.6h-1.2zM907.3 81.7h1.2v1.6h-1.2zM907.3 97.1h1.2v1.6h-1.2zM907.3 112.5h1.2v1.6h-1.2zM907.3 127.9h1.2v1.6h-1.2zM907.3 143.3h1.2v1.6h-1.2zM907.3 158.7h1.2v1.6h-1.2zM907.3 174.1h1.2v1.6h-1.2zM907.3 189.5h1.2v1.6h-1.2zM907.3 205.0h1.2v1.6h-1.2zM907.3 220.4h1.2v1.6h-1.2zM907.3 235.8h1.2v1.6h-1.2zM907.3 251.2h1.2v1.6h-1.2zM907.3 266.6h1.2v1.6h-1.2zM907.3 282.0h1.2v1.6h-1.2zM907.3 297.4h1.2v1.6h-1.2zM907.3 312.8h1.2v1.6h-1.2zM907.3 328.2h1.2v1.6h-1.2zM907.3 343.6h1.2v1.6h-1.2zM907.3 359.0h1.2v1.6h-1.2zM907.3 374.4h1.2v1.6h-1.2zM907.3 389.8h1.2v1.6h-1.2zM907.3 405.2h1.2v1.6h-1.2zM907.3 420.6h1.2v1.6h-1.2zM907.3 436.0h1.2v1.6h-1.2zM907.3 451.4h1.2v1.6h-1.2zM907.3 466.8h1.2v1.6h-1.2zM907.3 482.2h1.2v1.6h-1.2zM907.3 497.6h1.2v1.6h-1.2zM907.3 513.1h1.2v1.6h-1.2zM907.3 528.5h1.2v1.6h-1.2zM907.3 543.9h1.2v1.6h-1.2zM907.3 559.3h1.2v1.6h-1.2zM907.3 574.7h1.2v1.6h-1.2zM907.3 590.1h1.2v1.6h-1.2zM907.3 605.5h1.2v1.6h-1.2zM907.3 620.9h1.2v1.6h-1.2zM907.3 636.3h1.2v1.6h-1.2zM907.3 651.7h1.2v1.6h-1.2zM922.7 35.5h1.2v1.6h-1.2zM922.7 50.9h1.2v1.6h-1.2zM922.7 66.3h1.2v1.6h-1.2zM922.7 81.7h1.2v1.6h-1.2zM922.7 97.1h1.2v1.6h-1.2zM922.7 112.5h1.2v1.6h-1.2zM922.7 127.9h1.2v1.6h-1.2zM922.7 143.3h1.2v1.6h-1.2zM922.7 158.7h1.2v1.6h-1.2zM922.7 174.1h1.2v1.6h-1.2zM922.7 189.5h1.2v1.6h-1.2zM922.7 205.0h1.2v1.6h-1.2zM922.7 220.4h1.2v1.6h-1.2zM922.7 235.8h1.2v1.6h-1.2zM922.7 251.2h1.2v1.6h-1.2zM922.7 266.6h1.2v1.6h-1.2zM922.7 282.0h1.2v1.6h-1.2zM922.7 297.4h1.2v1.6h-1.2zM922.7 312.8h1.2v1.6h-1.2zM922.7 328.2h1.2v1.6h-1.2zM922.7 343.6h1.2v1.6h-1.2zM922.7 359.0h1.2v1.6h-1.2zM922.7 374.4h1.2v1.6h-1.2zM922.7 389.8h1.2v1.6h-1.2zM922.7 405.2h1.2v1.6h-1.2zM922.7 420.6h1.2v1.6h-1.2zM922.7 436.0h1.2v1.6h-1.2zM922.7 451.4h1.2v1.6h-1.2zM922.7 466.8h1.2v1.6h-1.2zM922.7 482.2h1.2v1.6h-1.2zM922.7 497.6h1.2v1.6h-1.2zM922.7 513.1h1.2v1.6h-1.2zM922.7 528.5h1.2v1.6h-1.2zM922.7 543.9h1.2v1.6h-1.2zM922.7 559.3h1.2v1.6h-1.2zM922.7 574.7h1.2v1.6h-1.2zM922.7 590.1h1.2v1.6h-1.2zM922.7 605.5h1.2v1.6h-1.2zM922.7 620.9h1.2v1.6h-1.2zM922.7 636.3h1.2v1.6h-1.2zM922.7 651.7h1.2v1.6h-1.2zM938.1 35.5h1.2v1.6h-1.2zM938.1 50.9h1.2v1.6h-1.2zM938.1 66.3h1.2v1.6h-1.2zM938.1 81.7h1.2v1.6h-1.2zM938.1 97.1h1.2v1.6h-1.2zM938.1 112.5h1.2v1.6h-1.2zM938.1 127.9h1.2v1.6h-1.2zM938.1 143.3h1.2v1.6h-1.2zM938.1 158.7h1.2v1.6h-1.2zM938.1 174.1h1.2v1.6h-1.2zM938.1 189.5h1.2v1.6h-1.2zM938.1 205.0h1.2v1.6h-1.2zM938.1 220.4h1.2v1.6h-1.2zM938.1 235.8h1.2v1.6h-1.2zM938.1 251.2h1.2v1.6h-1.2zM938.1 266.6h1.2v1.6h-1.2zM938.1 282.0h1.2v1.6h-1.2zM938.1 297.4h1.2v1.6h-1.2zM938.1 312.8h1.2v1.6h-1.2zM938.1 328.2h1.2v1.6h-1.2zM938.1 343.6h1.2v1.6h-1.2zM938.1 359.0h1.2v1.6h-1.2zM938.1 374.4h1.2v1.6h-1.2zM938.1 389.8h1.2v1.6h-1.2zM938.1 405.2h1.2v1.6h-1.2zM938.1 420.6h1.2v1.6h-1.2zM938.1 436.0h1.2v1.6h-1.2zM938.1 451.4h1.2v1.6h-1.2zM938.1 466.8h1.2v1.6h-1.2zM938.1 482.2h1.2v1.6h-1.2zM938.1 497.6h1.2v1.6h-1.2zM938.1 513.1h1.2v1.6h-1.2zM938.1 528.5h1.2v1.6h-1.2zM938.1 543.9h1.2v1.6h-1.2zM938.1 559.3h1.2v1.6h-1.2zM938.1 574.7h1.2v1.6h-1.2zM938.1 590.1h1.2v1.6h-1.2zM938.1 605.5h1.2v1.6h-1.2zM938.1 620.9h1.2v1.6h-1.2zM938.1 636.3h1.2v1.6h-1.2zM938.1 651.7h1.2v1.6h-1.2zM953.5 35.5h1.2v1.6h-1.2zM953.5 50.9h1.2v1.6h-1.2zM953.5 66.3h1.2v1.6h-1.2zM953.5 81.7h1.2v1.6h-1.2zM953.5 97.1h1.2v1.6h-1.2zM953.5 112.5h1.2v1.6h-1.2zM953.5 127.9h1.2v1.6h-1.2zM953.5 143.3h1.2v1.6h-1.2zM953.5 158.7h1.2v1.6h-1.2zM953.5 174.1h1.2v1.6h-1.2zM953.5 189.5h1.2v1.6h-1.2zM953.5 205.0h1.2v1.6h-1.2zM953.5 220.4h1.2v1.6h-1.2zM953.5 235.8h1.2v1.6h-1.2zM953.5 251.2h1.2v1.6h-1.2zM953.5 266.6h1.2v1.6h-1.2zM953.5 282.0h1.2v1.6h-1.2zM953.5 297.4h1.2v1.6h-1.2zM953.5 312.8h1.2v1.6h-1.2zM953.5 328.2h1.2v1.6h-1.2zM953.5 343.6h1.2v1.6h-1.2zM953.5 359.0h1.2v1.6h-1.2zM953.5 374.4h1.2v1.6h-1.2zM953.5 389.8h1.2v1.6h-1.2zM953.5 405.2h1.2v1.6h-1.2zM953.5 420.6h1.2v1.6h-1.2zM953.5 436.0h1.2v1.6h-1.2zM953.5 451.4h1.2v1.6h-1.2zM953.5 466.8h1.2v1.6h-1.2zM953.5 482.2h1.2v1.6h-1.2zM953.5 497.6h1.2v1.6h-1.2zM953.5 513.1h1.2v1.6h-1.2zM953.5 528.5h1.2v1.6h-1.2zM953.5 543.9h1.2v1.6h-1.2zM953.5 559.3h1.2v1.6h-1.2zM953.5 574.7h1.2v1.6h-1.2zM953.5 590.1h1.2v1.6h-1.2zM953.5 605.5h1.2v1.6h-1.2zM953.5 620.9h1.2v1.6h-1.2zM953.5 636.3h1.2v1.6h-1.2zM953.5 651.7h1.2v1.6h-1.2zM968.9 35.5h1.2v1.6h-1.2zM968.9 50.9h1.2v1.6h-1.2zM968.9 66.3h1.2v1.6h-1.2zM968.9 81.7h1.2v1.6h-1.2zM968.9 97.1h1.2v1.6h-1.2zM968.9 112.5h1.2v1.6h-1.2zM968.9 127.9h1.2v1.6h-1.2zM968.9 143.3h1.2v1.6h-1.2zM968.9 158.7h1.2v1.6h-1.2zM968.9 174.1h1.2v1.6h-1.2zM968.9 189.5h1.2v1.6h-1.2zM968.9 205.0h1.2v1.6h-1.2zM968.9 220.4h1.2v1.6h-1.2zM968.9 235.8h1.2v1.6h-1.2zM968.9 251.2h1.2v1.6h-1.2zM968.9 266.6h1.2v1.6h-1.2zM968.9 282.0h1.2v1.6h-1.2zM968.9 297.4h1.2v1.6h-1.2zM968.9 312.8h1.2v1.6h-1.2zM968.9 328.2h1.2v1.6h-1.2zM968.9 343.6h1.2v1.6h-1.2zM968.9 359.0h1.2v1.6h-1.2zM968.9 374.4h1.2v1.6h-1.2zM968.9 389.8h1.2v1.6h-1.2zM968.9 405.2h1.2v1.6h-1.2zM968.9 420.6h1.2v1.6h-1.2zM968.9 436.0h1.2v1.6h-1.2zM968.9 451.4h1.2v1.6h-1.2zM968.9 466.8h1.2v1.6h-1.2zM968.9 482.2h1.2v1.6h-1.2zM968.9 497.6h1.2v1.6h-1.2zM968.9 513.1h1.2v1.6h-1.2zM968.9 528.5h1.2v1.6h-1.2zM968.9 543.9h1.2v1.6h-1.2zM968.9 559.3h1.2v1.6h-1.2zM968.9 574.7h1.2v1.6h-1.2zM968.9 590.1h1.2v1.6h-1.2zM968.9 605.5h1.2v1.6h-1.2zM968.9 620.9h1.2v1.6h-1.2zM968.9 636.3h1.2v1.6h-1.2zM968.9 651.7h1.2v1.6h-1.2zM984.3 35.5h1.2v1.6h-1.2zM984.3 50.9h1.2v1.6h-1.2zM984.3 66.3h1.2v1.6h-1.2zM984.3 81.7h1.2v1.6h-1.2zM984.3 97.1h1.2v1.6h-1.2zM984.3 112.5h1.2v1.6h-1.2zM984.3 127.9h1.2v1.6h-1.2zM984.3 143.3h1.2v1.6h-1.2zM984.3 158.7h1.2v1.6h-1.2zM984.3 174.1h1.2v1.6h-1.2zM984.3 189.5h1.2v1.6h-1.2zM984.3 205.0h1.2v1.6h-1.2zM984.3 220.4h1.2v1.6h-1.2zM984.3 235.8h1.2v1.6h-1.2zM984.3 251.2h1.2v1.6h-1.2zM984.3 266.6h1.2v1.6h-1.2zM984.3 282.0h1.2v1.6h-1.2zM984.3 297.4h1.2v1.6h-1.2zM984.3 312.8h1.2v1.6h-1.2zM984.3 328.2h1.2v1.6h-1.2zM984.3 343.6h1.2v1.6h-1.2zM984.3 359.0h1.2v1.6h-1.2zM984.3 374.4h1.2v1.6h-1.2zM984.3 389.8h1.2v1.6h-1.2zM984.3 405.2h1.2v1.6h-1.2zM984.3 420.6h1.2v1.6h-1.2zM984.3 436.0h1.2v1.6h-1.2zM984.3 451.4h1.2v1.6h-1.2zM984.3 466.8h1.2v1.6h-1.2zM984.3 482.2h1.2v1.6h-1.2zM984.3 497.6h1.2v1.6h-1.2zM984.3 513.1h1.2v1.6h-1.2zM984.3 528.5h1.2v1.6h-1.2zM984.3 543.9h1.2v1.6h-1.2zM984.3 559.3h1.2v1.6h-1.2zM984.3 574.7h1.2v1.6h-1.2zM984.3 590.1h1.2v1.6h-1.2zM984.3 605.5h1.2v1.6h-1.2zM984.3 620.9h1.2v1.6h-1.2zM984.3 636.3h1.2v1.6h-1.2zM984.3 651.7h1.2v1.6h-1.2zM999.7 35.5h1.2v1.6h-1.2zM999.7 50.9h1.2v1.6h-1.2zM999.7 66.3h1.2v1.6h-1.2zM999.7 81.7h1.2v1.6h-1.2zM999.7 97.1h1.2v1.6h-1.2zM999.7 112.5h1.2v1.6h-1.2zM999.7 127.9h1.2v1.6h-1.2zM999.7 143.3h1.2v1.6h-1.2zM999.7 158.7h1.2v1.6h-1.2zM999.7 174.1h1.2v1.6h-1.2zM999.7 189.5h1.2v1.6h-1.2zM999.7 205.0h1.2v1.6h-1.2zM999.7 220.4h1.2v1.6h-1.2zM999.7 235.8h1.2v1.6h-1.2zM999.7 251.2h1.2v1.6h-1.2zM999.7 266.6h1.2v1.6h-1.2zM999.7 282.0h1.2v1.6h-1.2zM999.7 297.4h1.2v1.6h-1.2zM999.7 312.8h1.2v1.6h-1.2zM999.7 328.2h1.2v1.6h-1.2zM999.7 343.6h1.2v1.6h-1.2zM999.7 359.0h1.2v1.6h-1.2zM999.7 374.4h1.2v1.6h-1.2zM999.7 389.8h1.2v1.6h-1.2zM999.7 405.2h1.2v1.6h-1.2zM999.7 420.6h1.2v1.6h-1.2zM999.7 436.0h1.2v1.6h-1.2zM999.7 451.4h1.2v1.6h-1.2zM999.7 466.8h1.2v1.6h-1.2zM999.7 482.2h1.2v1.6h-1.2zM999.7 497.6h1.2v1.6h-1.2zM999.7 513.1h1.2v1.6h-1.2zM999.7 528.5h1.2v1.6h-1.2zM999.7 543.9h1.2v1.6h-1.2zM999.7 559.3h1.2v1.6h-1.2zM999.7 574.7h1.2v1.6h-1.2zM999.7 590.1h1.2v1.6h-1.2zM999.7 605.5h1.2v1.6h-1.2zM999.7 620.9h1.2v1.6h-1.2zM999.7 636.3h1.2v1.6h-1.2zM999.7 651.7h1.2v1.6h-1.2zM1015.1 35.5h1.2v1.6h-1.2zM1015.1 50.9h1.2v1.6h-1.2zM1015.1 66.3h1.2v1.6h-1.2zM1015.1 81.7h1.2v1.6h-1.2zM1015.1 97.1h1.2v1.6h-1.2zM1015.1 112.5h1.2v1.6h-1.2zM1015.1 127.9h1.2v1.6h-1.2zM1015.1 143.3h1.2v1.6h-1.2zM1015.1 158.7h1.2v1.6h-1.2zM1015.1 174.1h1.2v1.6h-1.2zM1015.1 189.5h1.2v1.6h-1.2zM1015.1 205.0h1.2v1.6h-1.2zM1015.1 220.4h1.2v1.6h-1.2zM1015.1 235.8h1.2v1.6h-1.2zM1015.1 251.2h1.2v1.6h-1.2zM1015.1 266.6h1.2v1.6h-1.2zM1015.1 282.0h1.2v1.6h-1.2zM1015.1 297.4h1.2v1.6h-1.2zM1015.1 312.8h1.2v1.6h-1.2zM1015.1 328.2h1.2v1.6h-1.2zM1015.1 343.6h1.2v1.6h-1.2zM1015.1 359.0h1.2v1.6h-1.2zM1015.1 374.4h1.2v1.6h-1.2zM1015.1 389.8h1.2v1.6h-1.2zM1015.1 405.2h1.2v1.6h-1.2zM1015.1 420.6h1.2v1.6h-1.2zM1015.1 436.0h1.2v1.6h-1.2zM1015.1 451.4h1.2v1.6h-1.2zM1015.1 466.8h1.2v1.6h-1.2zM1015.1 482.2h1.2v1.6h-1.2zM1015.1 497.6h1.2v1.6h-1.2zM1015.1 513.1h1.2v1.6h-1.2zM1015.1 528.5h1.2v1.6h-1.2zM1015.1 543.9h1.2v1.6h-1.2zM1015.1 559.3h1.2v1.6h-1.2zM1015.1 574.7h1.2v1.6h-1.2zM1015.1 590.1h1.2v1.6h-1.2zM1015.1 605.5h1.2v1.6h-1.2zM1015.1 620.9h1.2v1.6h-1.2zM1015.1 636.3h1.2v1.6h-1.2zM1015.1 651.7h1.2v1.6h-1.2z" fill="#7a7a7a"/>
<path d="M431.81 228.88H468.82A38.5 38.5 0 0 1 468.82 305.88H431.81Z" fill="none" stroke="#000" stroke-width="2.9"/><circle cx="515.93" cy="267.38" r="6.8" fill="#fff" stroke="#000" stroke-width="2.7"/><text x="469.72" y="280.27" text-anchor="middle" font-family="Liberation Sans" font-weight="bold" font-size="25.5" textLength="34" lengthAdjust="spacingAndGlyphs" fill="#0000ff">N1</text>
<path d="M570.45 121.04H607.46A38.5 38.5 0 0 1 607.46 198.04H570.45Z" fill="none" stroke="#000" stroke-width="2.9"/><circle cx="654.58" cy="159.54" r="6.8" fill="#fff" stroke="#000" stroke-width="2.7"/><text x="608.36" y="172.44" text-anchor="middle" font-family="Liberation Sans" font-weight="bold" font-size="25.5" textLength="34" lengthAdjust="spacingAndGlyphs" fill="#0000ff">N2</text>
<path d="M570.45 321.31H607.46A38.5 38.5 0 0 1 607.46 398.31H570.45Z" fill="none" stroke="#000" stroke-width="2.9"/><circle cx="654.58" cy="359.81" r="6.8" fill="#fff" stroke="#000" stroke-width="2.7"/><text x="608.36" y="372.70" text-anchor="middle" font-family="Liberation Sans" font-weight="bold" font-size="25.5" textLength="34" lengthAdjust="spacingAndGlyphs" fill="#0000ff">N3</text>
<path d="M724.50 228.88H761.51A38.5 38.5 0 0 1 761.51 305.88H724.50Z" fill="none" stroke="#000" stroke-width="2.9"/><circle cx="808.62" cy="267.38" r="6.8" fill="#fff" stroke="#000" stroke-width="2.7"/><text x="762.41" y="280.27" text-anchor="middle" font-family="Liberation Sans" font-weight="bold" font-size="25.5" textLength="34" lengthAdjust="spacingAndGlyphs" fill="#0000ff">N4</text>
<path d="M360.98 236.56 L430.31 236.56" fill="none" stroke="#006400" stroke-width="4.8" stroke-linecap="butt" stroke-linejoin="miter"/>
<path d="M360.98 298.19 L430.31 298.19" fill="none" stroke="#006400" stroke-width="4.8" stroke-linecap="butt" stroke-linejoin="miter"/>
<path d="M568.95 128.73 L399.50 128.73 L399.50 236.56" fill="none" stroke="#006400" stroke-width="4.8" stroke-linecap="butt" stroke-linejoin="miter"/>
<path d="M568.95 390.62 L399.50 390.62 L399.50 298.19" fill="none" stroke="#006400" stroke-width="4.8" stroke-linecap="butt" stroke-linejoin="miter"/>
<path d="M815.43 267.38 L884.75 267.38" fill="none" stroke="#006400" stroke-width="4.8" stroke-linecap="butt" stroke-linejoin="miter"/>
<path d="M877 267.38H886.5" stroke="#006400" stroke-width="4.8"/>
<path d="M522.74 267.38 L538.14 267.38" fill="none" stroke="#00d200" stroke-width="4.8" stroke-linecap="butt" stroke-linejoin="miter"/>
<path d="M568.95 190.35 L538.14 190.35 L538.14 329.00 L568.95 329.00" fill="none" stroke="#00d200" stroke-width="4.8" stroke-linecap="butt" stroke-linejoin="miter"/>
<path d="M661.38 159.54 L676.79 159.54 L676.79 236.56 L723.00 236.56" fill="none" stroke="#00d200" stroke-width="4.8" stroke-linecap="butt" stroke-linejoin="miter"/>
<path d="M661.38 359.81 L692.19 359.81 L692.19 298.19 L723.00 298.19" fill="none" stroke="#00d200" stroke-width="4.8" stroke-linecap="butt" stroke-linejoin="miter"/>
<circle cx="399.50" cy="236.56" r="7.6" fill="#006400"/>
<circle cx="399.50" cy="298.19" r="7.6" fill="#006400"/>
<circle cx="538.14" cy="267.38" r="7.6" fill="#00d200"/>
<circle cx="430.31" cy="236.56" r="3.1" fill="#006400"/>
<circle cx="430.31" cy="298.19" r="3.1" fill="#006400"/>
<circle cx="568.95" cy="128.73" r="3.1" fill="#006400"/>
<circle cx="568.95" cy="390.62" r="3.1" fill="#006400"/>
<circle cx="568.95" cy="190.35" r="3.1" fill="#00d200"/>
<circle cx="568.95" cy="329.00" r="3.1" fill="#00d200"/>
<circle cx="723.00" cy="236.56" r="3.1" fill="#00d200"/>
<circle cx="723.00" cy="298.19" r="3.1" fill="#00d200"/>
<circle cx="877.05" cy="267.38" r="3.1" fill="#006400"/>
<circle cx="368.69" cy="236.56" r="3.1" fill="#006400"/>
<circle cx="368.69" cy="298.19" r="3.1" fill="#006400"/>
<circle cx="522.74" cy="267.38" r="3.1" fill="#00d200"/>
<circle cx="661.38" cy="159.54" r="3.1" fill="#00d200"/>
<circle cx="661.38" cy="359.81" r="3.1" fill="#00d200"/>
<circle cx="815.43" cy="267.38" r="3.1" fill="#006400"/>
<path d="M308.56 222.91H345.56L361.06 236.56L345.56 250.22H308.56Z" fill="none" stroke="#000" stroke-width="2.8" stroke-linejoin="miter"/><ellipse cx="330.9" cy="235.06" rx="7.1" ry="11" fill="#006400"/><ellipse cx="330.9" cy="234.97" rx="3.3" ry="5.3" fill="none" stroke="#fff" stroke-width="2.3"/><path d="M328.7 238.57L333.09999999999997 231.37" stroke="#fff" stroke-width="2.2"/><text x="342.3" y="246.87" text-anchor="middle" font-family="Liberation Sans" font-size="14" fill="#0000ff">b</text><text x="303.6" y="249.37" text-anchor="end" font-family="Liberation Sans" font-weight="bold" font-size="25.5" fill="#0000ff">A</text>
<path d="M308.56 284.54H345.56L361.06 298.19L345.56 311.83H308.56Z" fill="none" stroke="#000" stroke-width="2.8" stroke-linejoin="miter"/><ellipse cx="330.9" cy="296.69" rx="7.1" ry="11" fill="#006400"/><ellipse cx="330.9" cy="296.58" rx="3.3" ry="5.3" fill="none" stroke="#fff" stroke-width="2.3"/><path d="M328.7 300.18L333.09999999999997 292.97999999999996" stroke="#fff" stroke-width="2.2"/><text x="342.3" y="308.49" text-anchor="middle" font-family="Liberation Sans" font-size="14" fill="#0000ff">b</text><text x="304.8" y="310.99" text-anchor="end" font-family="Liberation Sans" font-weight="bold" font-size="25.5" textLength="16.3" lengthAdjust="spacingAndGlyphs" fill="#0000ff">B</text>
<path d="M886.7 253.62H923.3L938.5 267.38L923.3 281.12H886.7Z" fill="none" stroke="#000" stroke-width="2.8"/>
<ellipse cx="908.1" cy="265.38" rx="3.3" ry="5.6" fill="none" stroke="#000" stroke-width="1.9"/><path d="M905.9 269.68L910.3 261.07" stroke="#000" stroke-width="1.6"/>
<text x="920.2" y="277.68" text-anchor="middle" font-family="Liberation Sans" font-size="14" fill="#0000ff">b</text>
<text x="941.8" y="280.18" font-family="Liberation Sans" font-weight="bold" font-size="25.5" fill="#0000ff">Q</text>
<rect x="872.8" y="247.6" width="10.2" height="10.2" fill="#fff" stroke="#000" stroke-width="1.5"/>
<rect x="957.2" y="247.6" width="10.2" height="10.2" fill="#fff" stroke="#000" stroke-width="1.5"/>
<rect x="872.8" y="281.4" width="10.2" height="10.2" fill="#fff" stroke="#000" stroke-width="1.5"/>
<rect x="957.2" y="281.4" width="10.2" height="10.2" fill="#fff" stroke="#000" stroke-width="1.5"/>
</g>
<rect x="1016" y="37" width="6" height="623" fill="#f6f6f6"/>
<rect x="1017.5" y="38" width="3.5" height="190.5" rx="1.7" fill="#c4c4c4"/>
<rect x="258" y="654" width="758" height="6" fill="#f6f6f6"/>
<rect x="311.3" y="655" width="196" height="3.8" rx="1.9" fill="#c4c4c4"/>
<path d="M256 34.5H1024V662H256z M258 36.1V660H1022V36.1z" fill="#8cb4e6" fill-rule="evenodd"/>
</svg>
</body></html>
